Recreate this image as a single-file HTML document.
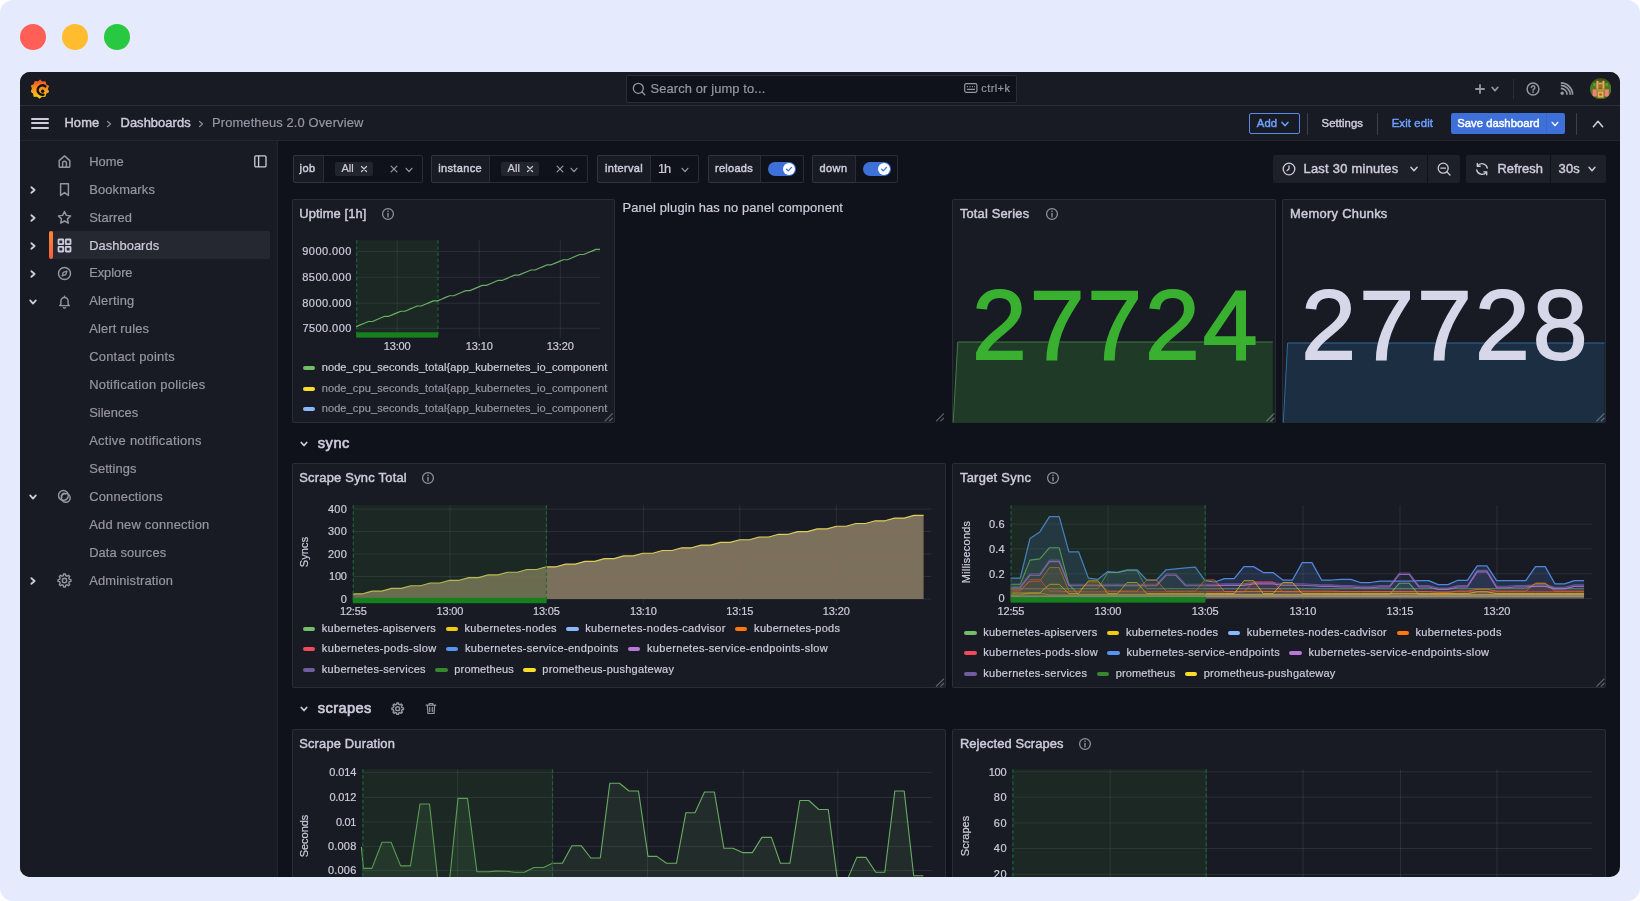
<!DOCTYPE html>
<html lang="en"><head><meta charset="utf-8"><title>Prometheus 2.0 Overview - Dashboards - Grafana</title>
<style>
html,body{margin:0;padding:0;background:#fff;}
body{width:1640px;height:901px;overflow:hidden;position:relative;font-family:"Liberation Sans", sans-serif;}
#bg{position:absolute;left:0;top:0;width:1640px;height:901px;background:#e6eafd;border-radius:13px;}
.dot{position:absolute;top:24px;width:26px;height:26px;border-radius:50%;}
#win{position:absolute;left:20px;top:72px;width:1600px;height:805px;border-radius:10px;overflow:hidden;background:#0f121a;}
#pg{position:absolute;left:-20px;top:-72px;width:1640px;height:901px;will-change:transform;}
.a{position:absolute;}
.t{white-space:nowrap;margin:0;padding:0;z-index:2;}
svg.a{z-index:1;}
</style></head>
<body>
<div id="bg"></div>
<div class="dot" style="left:20px;background:#ff5f57"></div>
<div class="dot" style="left:62px;background:#febc2e"></div>
<div class="dot" style="left:104px;background:#28c840"></div>
<div id="win"><div id="pg">
<div class="a" style="left:20px;top:72px;width:1600px;height:33.5px;background:#181b23;"></div>
<div class="a" style="left:20px;top:105px;width:1600px;height:1px;background:rgba(204,204,220,0.10);"></div>
<div class="a" style="left:20px;top:106px;width:1600px;height:34px;background:#181b23;"></div>
<div class="a" style="left:20px;top:140px;width:1600px;height:1px;background:rgba(204,204,220,0.10);"></div>
<svg class="a" style="left:31px;top:78.6px;" width="17.8" height="20.2" viewBox="0 0 20 21" fill="none"><defs><linearGradient id="lg" x1="0" y1="1" x2="0" y2="0"><stop offset="0" stop-color="#fbd115"/><stop offset="0.5" stop-color="#f8941f"/><stop offset="1" stop-color="#f0532a"/></linearGradient></defs>
<path d="M10.2 0.4 L12.6 2.6 L15.9 2.3 L16.6 5.5 L19.6 7.2 L18.3 10.3 L19.7 13.6 L16.7 15.2 L15.7 18.6 L12.3 18.2 L9.6 20.6 L6.9 18.4 L3.5 18.6 L2.9 15.2 L0.3 13.2 L1.7 10.1 L0.6 6.8 L3.6 5.3 L4.6 2.1 L7.9 2.6 Z" fill="url(#lg)" stroke="url(#lg)" stroke-width="1.2" stroke-linejoin="round"/>
<path d="M16.1 7.5 A5.3 5.3 0 1 0 14.1 16.7" stroke="#1a1210" stroke-width="2.7" stroke-linecap="round"/>
<circle cx="13.1" cy="12.9" r="1.9" fill="#1a1210"/></svg>
<div class="a" style="left:626px;top:75px;width:391px;height:27.5px;background:#0f121a;border:1px solid rgba(204,204,220,0.15);border-radius:2px;box-sizing:border-box;"></div>
<svg class="a" style="left:632px;top:81.5px;" width="14" height="14" viewBox="0 0 14 14" fill="none"><circle cx="6.3" cy="6.3" r="5" stroke="#9596a3" stroke-width="1.3"/><path d="M10 10 L12.8 12.8" stroke="#9596a3" stroke-width="1.3" stroke-linecap="round"/></svg>
<div class="a t" style="left:650.50px;top:79.70px;height:18px;line-height:18px;font-size:12.9px;color:#9596a3;letter-spacing:0.125px;-webkit-text-stroke:0.2px #9596a3;">Search or jump to...</div>
<svg class="a" style="left:963.5px;top:83px;" width="14" height="11" viewBox="0 0 14 11" fill="none"><rect x="0.7" y="0.7" width="12.2" height="8.6" rx="1.5" stroke="#9596a3" stroke-width="1.2"/><path d="M3 3.6h1M5.5 3.6h1M8 3.6h1M10.3 3.6h0.6M3 6.4h8" stroke="#9596a3" stroke-width="1.1"/></svg>
<div class="a t" style="left:981.30px;top:80.70px;height:15px;line-height:15px;font-size:11px;color:#9596a3;letter-spacing:0.401px;-webkit-text-stroke:0.2px #9596a3;">ctrl+k</div>
<svg class="a" style="left:1473.5px;top:82.7px;" width="12" height="12" viewBox="0 0 12 12" fill="none"><path d="M6 1.9V10.1M1.9 6H10.1" stroke="#9596a3" stroke-width="1.8" stroke-linecap="round"/></svg>
<svg class="a" style="left:1486.6px;top:80.8px;" width="16" height="16" viewBox="-8 -8 16 16" fill="none"><path d="M-2.9 -1.682 L0 1.682 L2.9 -1.682" stroke="#9596a3" stroke-width="1.7" stroke-linecap="round" stroke-linejoin="round"/></svg>
<div class="a" style="left:1512.5px;top:78.5px;width:1px;height:20px;background:rgba(204,204,220,0.10);"></div>
<svg class="a" style="left:1524.6px;top:80.5px;" width="16" height="16" viewBox="0 0 16 16" fill="none"><circle cx="8" cy="8" r="5.9" stroke="#9596a3" stroke-width="1.5"/><path d="M6.3 6.6a1.75 1.75 0 1 1 2.5 1.6c-0.5 0.3-0.8 0.5-0.8 1.1" stroke="#9596a3" stroke-width="1.5" stroke-linecap="round"/><circle cx="8" cy="11.1" r="0.95" fill="#9596a3"/></svg>
<svg class="a" style="left:1560.3px;top:82px;" width="14" height="14" viewBox="0 0 14 14" fill="none"><circle cx="2.2" cy="11.2" r="1.7" fill="#9596a3"/><path d="M0.8 6.4a6.3 6.3 0 0 1 6.3 6.3M0.8 3.3a9.4 9.4 0 0 1 9.4 9.4M0.8 0.9a11.8 11.8 0 0 1 11.8 11.8" stroke="#9596a3" stroke-width="1.7"/></svg>
<svg class="a" style="left:1589.6px;top:77.5px;" width="21.4" height="21.4" viewBox="0 0 21.4 21.4" fill="none"><defs><clipPath id="avc"><circle cx="10.7" cy="10.7" r="10.7"/></clipPath><linearGradient id="avg" x1="0" y1="0" x2="0" y2="1"><stop offset="0" stop-color="#3a4a12"/><stop offset="0.35" stop-color="#4b7a1f"/><stop offset="0.8" stop-color="#5a7a1e"/><stop offset="1" stop-color="#4a5a14"/></linearGradient></defs>
<g clip-path="url(#avc)"><rect width="22" height="22" fill="url(#avg)"/>
<rect x="6.4" y="2.8" width="2.1" height="8" fill="#f0a565"/><rect x="12.4" y="2.8" width="2.1" height="8" fill="#f0a565"/>
<rect x="8.4" y="4.6" width="4.2" height="1.9" fill="#e8a050"/>
<rect x="8.6" y="7.2" width="3.8" height="2.4" fill="#b8682a"/>
<rect x="2.6" y="11.4" width="4.2" height="7" fill="#ee827a"/><rect x="14.6" y="11.4" width="4.2" height="7" fill="#ee827a"/><rect x="3.2" y="5" width="2.6" height="3" fill="#5d9a2a"/><rect x="15.4" y="5" width="2.6" height="3" fill="#5d9a2a"/>
<rect x="6.8" y="11" width="7.8" height="2.2" fill="#c98a35"/>
<rect x="7.6" y="13.4" width="6" height="6.2" fill="#e6b055"/>
<rect x="9.4" y="15.4" width="2.4" height="2.2" fill="#b85a12"/>
</g></svg>
<div class="a" style="left:31px;top:117.9px;width:18.3px;height:1.8px;background:#ccccdc;border-radius:1px;"></div>
<div class="a" style="left:31px;top:122.4px;width:18.3px;height:1.8px;background:#ccccdc;border-radius:1px;"></div>
<div class="a" style="left:31px;top:126.9px;width:18.3px;height:1.8px;background:#ccccdc;border-radius:1px;"></div>
<div class="a t" style="left:64.40px;top:114.30px;height:18px;line-height:18px;font-size:12.9px;color:#ccccdc;letter-spacing:0.152px;-webkit-text-stroke:0.45px #ccccdc;">Home</div>
<svg class="a" style="left:100.8px;top:115.6px;" width="16" height="16" viewBox="-8 -8 16 16" fill="none"><path d="M-1.508 -2.6 L1.508 0 L-1.508 2.6" stroke="#9596a3" stroke-width="1.2" stroke-linecap="round" stroke-linejoin="round"/></svg>
<div class="a t" style="left:120.50px;top:114.30px;height:18px;line-height:18px;font-size:12.9px;color:#ccccdc;letter-spacing:0.068px;-webkit-text-stroke:0.45px #ccccdc;">Dashboards</div>
<svg class="a" style="left:193px;top:115.6px;" width="16" height="16" viewBox="-8 -8 16 16" fill="none"><path d="M-1.508 -2.6 L1.508 0 L-1.508 2.6" stroke="#9596a3" stroke-width="1.2" stroke-linecap="round" stroke-linejoin="round"/></svg>
<div class="a t" style="left:212.00px;top:114.30px;height:18px;line-height:18px;font-size:12.9px;color:#9596a3;letter-spacing:0.134px;-webkit-text-stroke:0.2px #9596a3;">Prometheus 2.0 Overview</div>
<div class="a" style="left:1249px;top:113.4px;width:51px;height:20.6px;border:1px solid #5b8ae6;border-radius:2px;box-sizing:border-box;"></div>
<div class="a t" style="left:1256.80px;top:115.30px;height:16px;line-height:16px;font-size:11.3px;color:#6e9fff;letter-spacing:0.097px;-webkit-text-stroke:0.45px #6e9fff;">Add</div>
<svg class="a" style="left:1277.2px;top:115.6px;" width="16" height="16" viewBox="-8 -8 16 16" fill="none"><path d="M-3.1 -1.798 L0 1.798 L3.1 -1.798" stroke="#6e9fff" stroke-width="1.4" stroke-linecap="round" stroke-linejoin="round"/></svg>
<div class="a" style="left:1307.2px;top:112.7px;width:1px;height:22px;background:rgba(204,204,220,0.2);"></div>
<div class="a t" style="left:1321.50px;top:115.30px;height:16px;line-height:16px;font-size:11.3px;color:#ccccdc;letter-spacing:0.096px;-webkit-text-stroke:0.45px #ccccdc;">Settings</div>
<div class="a" style="left:1377.4px;top:112.7px;width:1px;height:22px;background:rgba(204,204,220,0.2);"></div>
<div class="a t" style="left:1391.70px;top:115.30px;height:16px;line-height:16px;font-size:11.3px;color:#6e9fff;letter-spacing:0.135px;-webkit-text-stroke:0.45px #6e9fff;">Exit edit</div>
<div class="a" style="left:1450.7px;top:113.4px;width:114.2px;height:20.6px;background:#3d71d9;border-radius:2px;"></div>
<div class="a t" style="left:1457.30px;top:115.30px;height:16px;line-height:16px;font-size:11.3px;color:#ffffff;letter-spacing:-0.006px;-webkit-text-stroke:0.45px #ffffff;">Save dashboard</div>
<div class="a" style="left:1545.6px;top:113.4px;width:1px;height:20.6px;background:rgba(0,0,0,0.07);"></div>
<svg class="a" style="left:1547.2px;top:115.7px;" width="16" height="16" viewBox="-8 -8 16 16" fill="none"><path d="M-2.8 -1.624 L0 1.624 L2.8 -1.624" stroke="#ffffff" stroke-width="1.4" stroke-linecap="round" stroke-linejoin="round"/></svg>
<div class="a" style="left:1575.5px;top:112.7px;width:1px;height:22px;background:rgba(204,204,220,0.2);"></div>
<svg class="a" style="left:1590.3px;top:115.5px;" width="16" height="16" viewBox="-8 -8 16 16" fill="none"><path d="M-4.6 2.668 L0 -2.668 L4.6 2.668" stroke="#ccccdc" stroke-width="1.6" stroke-linecap="round" stroke-linejoin="round"/></svg>
<div class="a" style="left:20px;top:141px;width:256.5px;height:740px;background:#181b23;"></div>
<div class="a" style="left:276.5px;top:141px;width:1px;height:740px;background:rgba(204,204,220,0.10);"></div>
<div class="a" style="left:50px;top:231.32px;width:220px;height:28px;background:rgba(204,204,220,0.08);border-radius:2px;"></div>
<div class="a" style="left:48.5px;top:231.32px;width:4px;height:28px;background:linear-gradient(0deg,#f55f3e,#ff8833);border-radius:2px;"></div>
<div class="a t" style="left:89.20px;top:152.70px;height:18px;line-height:18px;font-size:12.9px;color:#9596a3;letter-spacing:0.052px;-webkit-text-stroke:0.2px #9596a3;">Home</div>
<svg class="a" style="left:57px;top:154.1px;" width="15" height="15" viewBox="0 0 15 15" fill="none"><path d="M2.2 6.6 L7.5 1.9 L12.8 6.6 V12.6 a0.6 0.6 0 0 1 -0.6 0.6 H2.8 a0.6 0.6 0 0 1 -0.6 -0.6 Z M5.6 13 V9.2 a1.9 1.9 0 0 1 3.8 0 V13" stroke="#9596a3" stroke-width="1.45" stroke-linejoin="round"/></svg>
<div class="a t" style="left:89.20px;top:180.64px;height:18px;line-height:18px;font-size:12.9px;color:#9596a3;letter-spacing:0.146px;-webkit-text-stroke:0.2px #9596a3;">Bookmarks</div>
<svg class="a" style="left:24.8px;top:181.74px;" width="16" height="16" viewBox="-8 -8 16 16" fill="none"><path d="M-1.624 -2.8 L1.624 0 L-1.624 2.8" stroke="#ccccdc" stroke-width="1.8" stroke-linecap="round" stroke-linejoin="round"/></svg>
<svg class="a" style="left:57px;top:182.04px;" width="15" height="15" viewBox="0 0 15 15" fill="none"><path d="M3.6 1.8 H11.4 V13.4 L7.5 10.6 L3.6 13.4 Z" stroke="#9596a3" stroke-width="1.45" stroke-linejoin="round"/></svg>
<div class="a t" style="left:89.20px;top:208.58px;height:18px;line-height:18px;font-size:12.9px;color:#9596a3;letter-spacing:0.074px;-webkit-text-stroke:0.2px #9596a3;">Starred</div>
<svg class="a" style="left:24.8px;top:209.68px;" width="16" height="16" viewBox="-8 -8 16 16" fill="none"><path d="M-1.624 -2.8 L1.624 0 L-1.624 2.8" stroke="#ccccdc" stroke-width="1.8" stroke-linecap="round" stroke-linejoin="round"/></svg>
<svg class="a" style="left:57px;top:209.98px;" width="15" height="15" viewBox="0 0 15 15" fill="none"><path d="M7.5 1.5 L9.35 5.35 L13.6 5.9 L10.5 8.85 L11.3 13.05 L7.5 11 L3.7 13.05 L4.5 8.85 L1.4 5.9 L5.65 5.35 Z" stroke="#9596a3" stroke-width="1.45" stroke-linejoin="round"/></svg>
<div class="a t" style="left:89.20px;top:236.52px;height:18px;line-height:18px;font-size:12.9px;color:#ccccdc;letter-spacing:0.048px;-webkit-text-stroke:0.2px #ccccdc;">Dashboards</div>
<svg class="a" style="left:24.8px;top:237.62px;" width="16" height="16" viewBox="-8 -8 16 16" fill="none"><path d="M-1.624 -2.8 L1.624 0 L-1.624 2.8" stroke="#ccccdc" stroke-width="1.8" stroke-linecap="round" stroke-linejoin="round"/></svg>
<svg class="a" style="left:57px;top:237.92px;" width="15" height="15" viewBox="0 0 15 15" fill="none"><rect x="1.5" y="1.5" width="4.7" height="4.7" rx="0.5" stroke="#ccccdc" stroke-width="1.8"/><rect x="8.8" y="1.5" width="4.7" height="4.7" rx="0.5" stroke="#ccccdc" stroke-width="1.8"/><rect x="1.5" y="8.8" width="4.7" height="4.7" rx="0.5" stroke="#ccccdc" stroke-width="1.8"/><rect x="8.8" y="8.8" width="4.7" height="4.7" rx="0.5" stroke="#ccccdc" stroke-width="1.8"/></svg>
<div class="a t" style="left:89.20px;top:264.46px;height:18px;line-height:18px;font-size:12.9px;color:#9596a3;letter-spacing:-0.060px;-webkit-text-stroke:0.2px #9596a3;">Explore</div>
<svg class="a" style="left:24.8px;top:265.56px;" width="16" height="16" viewBox="-8 -8 16 16" fill="none"><path d="M-1.624 -2.8 L1.624 0 L-1.624 2.8" stroke="#ccccdc" stroke-width="1.8" stroke-linecap="round" stroke-linejoin="round"/></svg>
<svg class="a" style="left:57px;top:265.86px;" width="15" height="15" viewBox="0 0 15 15" fill="none"><circle cx="7.5" cy="7.5" r="6" stroke="#9596a3" stroke-width="1.45"/><path d="M9.9 5.1 L8.7 8.7 L5.1 9.9 L6.3 6.3 Z" stroke="#9596a3" stroke-width="1.3" stroke-linejoin="round"/></svg>
<div class="a t" style="left:89.20px;top:292.40px;height:18px;line-height:18px;font-size:12.9px;color:#9596a3;letter-spacing:0.198px;-webkit-text-stroke:0.2px #9596a3;">Alerting</div>
<svg class="a" style="left:24.8px;top:293.5px;" width="16" height="16" viewBox="-8 -8 16 16" fill="none"><path d="M-2.8 -1.624 L0 1.624 L2.8 -1.624" stroke="#ccccdc" stroke-width="1.8" stroke-linecap="round" stroke-linejoin="round"/></svg>
<svg class="a" style="left:57px;top:293.8px;" width="15" height="15" viewBox="0 0 15 15" fill="none"><path d="M3.9 10.2 V7 a3.6 3.6 0 0 1 7.2 0 V10.2 L12.3 11.6 H2.7 Z" stroke="#9596a3" stroke-width="1.45" stroke-linejoin="round"/><path d="M6.2 13.2 a1.4 1.4 0 0 0 2.6 0" stroke="#9596a3" stroke-width="1.4"/><path d="M7.5 2.1 V3.2" stroke="#9596a3" stroke-width="1.4" stroke-linecap="round"/></svg>
<div class="a t" style="left:89.20px;top:320.34px;height:18px;line-height:18px;font-size:12.9px;color:#9596a3;letter-spacing:0.179px;-webkit-text-stroke:0.2px #9596a3;">Alert rules</div>
<div class="a t" style="left:89.20px;top:348.28px;height:18px;line-height:18px;font-size:12.9px;color:#9596a3;letter-spacing:0.242px;-webkit-text-stroke:0.2px #9596a3;">Contact points</div>
<div class="a t" style="left:89.20px;top:376.22px;height:18px;line-height:18px;font-size:12.9px;color:#9596a3;letter-spacing:0.284px;-webkit-text-stroke:0.2px #9596a3;">Notification policies</div>
<div class="a t" style="left:89.20px;top:404.16px;height:18px;line-height:18px;font-size:12.9px;color:#9596a3;letter-spacing:0.033px;-webkit-text-stroke:0.2px #9596a3;">Silences</div>
<div class="a t" style="left:89.20px;top:432.10px;height:18px;line-height:18px;font-size:12.9px;color:#9596a3;letter-spacing:0.287px;-webkit-text-stroke:0.2px #9596a3;">Active notifications</div>
<div class="a t" style="left:89.20px;top:460.04px;height:18px;line-height:18px;font-size:12.9px;color:#9596a3;letter-spacing:0.090px;-webkit-text-stroke:0.2px #9596a3;">Settings</div>
<div class="a t" style="left:89.20px;top:487.98px;height:18px;line-height:18px;font-size:12.9px;color:#9596a3;letter-spacing:0.193px;-webkit-text-stroke:0.2px #9596a3;">Connections</div>
<svg class="a" style="left:24.8px;top:489.08px;" width="16" height="16" viewBox="-8 -8 16 16" fill="none"><path d="M-2.8 -1.624 L0 1.624 L2.8 -1.624" stroke="#ccccdc" stroke-width="1.8" stroke-linecap="round" stroke-linejoin="round"/></svg>
<svg class="a" style="left:57px;top:489.38px;" width="15" height="15" viewBox="0 0 15 15" fill="none"><circle cx="6.4" cy="6.4" r="4.9" stroke="#9596a3" stroke-width="1.45"/><circle cx="8.8" cy="8.8" r="4.4" stroke="#9596a3" stroke-width="1.45"/><path d="M5.2 8.9 a2.6 2.6 0 0 1 3.7 -3.7" stroke="#9596a3" stroke-width="1.3"/></svg>
<div class="a t" style="left:89.20px;top:515.92px;height:18px;line-height:18px;font-size:12.9px;color:#9596a3;letter-spacing:0.233px;-webkit-text-stroke:0.2px #9596a3;">Add new connection</div>
<div class="a t" style="left:89.20px;top:543.86px;height:18px;line-height:18px;font-size:12.9px;color:#9596a3;letter-spacing:0.087px;-webkit-text-stroke:0.2px #9596a3;">Data sources</div>
<div class="a t" style="left:89.20px;top:571.80px;height:18px;line-height:18px;font-size:12.9px;color:#9596a3;letter-spacing:0.165px;-webkit-text-stroke:0.2px #9596a3;">Administration</div>
<svg class="a" style="left:24.8px;top:572.9px;" width="16" height="16" viewBox="-8 -8 16 16" fill="none"><path d="M-1.624 -2.8 L1.624 0 L-1.624 2.8" stroke="#ccccdc" stroke-width="1.8" stroke-linecap="round" stroke-linejoin="round"/></svg>
<svg class="a" style="left:57px;top:573.2px;" width="15" height="15" viewBox="0 0 15 15" fill="none"><circle cx="7.5" cy="7.5" r="2.2" stroke="#9596a3" stroke-width="1.4"/><path d="M6.33 2.64 L6.58 1.06 L8.42 1.06 L8.67 2.64 L10.11 3.24 L11.40 2.30 L12.70 3.60 L11.76 4.89 L12.36 6.33 L13.94 6.58 L13.94 8.42 L12.36 8.67 L11.76 10.11 L12.70 11.40 L11.40 12.70 L10.11 11.76 L8.67 12.36 L8.42 13.94 L6.58 13.94 L6.33 12.36 L4.89 11.76 L3.60 12.70 L2.30 11.40 L3.24 10.11 L2.64 8.67 L1.06 8.42 L1.06 6.58 L2.64 6.33 L3.24 4.89 L2.30 3.60 L3.60 2.30 L4.89 3.24 Z" stroke="#9596a3" stroke-width="1.4" stroke-linejoin="round"/></svg>
<svg class="a" style="left:253.5px;top:155.3px;" width="13" height="13" viewBox="0 0 13 13" fill="none"><rect x="0.8" y="0.9" width="11.2" height="11" rx="1.2" stroke="#ccccdc" stroke-width="1.3"/><path d="M4.6 1V12" stroke="#ccccdc" stroke-width="1.3"/></svg>
<div class="a" style="left:292.5px;top:155.4px;width:31px;height:27.4px;background:#181b23;border:1px solid rgba(204,204,220,0.15);border-radius:2px 0 0 2px;box-sizing:border-box;"></div>
<div class="a" style="left:322.5px;top:155.4px;width:100.5px;height:27.4px;background:#0f121a;border:1px solid rgba(204,204,220,0.15);border-radius:0 2px 2px 0;box-sizing:border-box;"></div>
<div class="a t" style="left:299.50px;top:161.20px;height:15px;line-height:15px;font-size:11px;color:#ccccdc;letter-spacing:0.438px;-webkit-text-stroke:0.45px #ccccdc;">job</div>
<div class="a" style="left:334.5px;top:162px;width:38.5px;height:14.3px;background:rgba(204,204,220,0.1);border-radius:2px;"></div>
<div class="a t" style="left:341.50px;top:161.30px;height:15px;line-height:15px;font-size:11px;color:#ccccdc;letter-spacing:-0.011px;-webkit-text-stroke:0.2px #ccccdc;">All</div>
<svg class="a" style="left:355.8px;top:160.9px;" width="16" height="16" viewBox="-8 -8 16 16" fill="none"><path d="M-2.5 -2.5 L2.5 2.5 M2.5 -2.5 L-2.5 2.5" stroke="#ccccdc" stroke-width="1.2" stroke-linecap="round"/></svg>
<svg class="a" style="left:386.3px;top:161.3px;" width="16" height="16" viewBox="-8 -8 16 16" fill="none"><path d="M-2.9 -2.9 L2.9 2.9 M2.9 -2.9 L-2.9 2.9" stroke="#9596a3" stroke-width="1.25" stroke-linecap="round"/></svg>
<svg class="a" style="left:400.6px;top:161.5px;" width="16" height="16" viewBox="-8 -8 16 16" fill="none"><path d="M-2.9 -1.682 L0 1.682 L2.9 -1.682" stroke="#9596a3" stroke-width="1.3" stroke-linecap="round" stroke-linejoin="round"/></svg>
<div class="a" style="left:431.2px;top:155.4px;width:59px;height:27.4px;background:#181b23;border:1px solid rgba(204,204,220,0.15);border-radius:2px 0 0 2px;box-sizing:border-box;"></div>
<div class="a" style="left:489.2px;top:155.4px;width:99.1px;height:27.4px;background:#0f121a;border:1px solid rgba(204,204,220,0.15);border-radius:0 2px 2px 0;box-sizing:border-box;"></div>
<div class="a t" style="left:438.20px;top:161.20px;height:15px;line-height:15px;font-size:11px;color:#ccccdc;letter-spacing:0.352px;-webkit-text-stroke:0.45px #ccccdc;">instance</div>
<div class="a" style="left:500.7px;top:162px;width:38.5px;height:14.3px;background:rgba(204,204,220,0.1);border-radius:2px;"></div>
<div class="a t" style="left:507.60px;top:161.30px;height:15px;line-height:15px;font-size:11px;color:#ccccdc;letter-spacing:0.055px;-webkit-text-stroke:0.2px #ccccdc;">All</div>
<svg class="a" style="left:521.6px;top:160.9px;" width="16" height="16" viewBox="-8 -8 16 16" fill="none"><path d="M-2.5 -2.5 L2.5 2.5 M2.5 -2.5 L-2.5 2.5" stroke="#ccccdc" stroke-width="1.2" stroke-linecap="round"/></svg>
<svg class="a" style="left:552px;top:161.3px;" width="16" height="16" viewBox="-8 -8 16 16" fill="none"><path d="M-2.9 -2.9 L2.9 2.9 M2.9 -2.9 L-2.9 2.9" stroke="#9596a3" stroke-width="1.25" stroke-linecap="round"/></svg>
<svg class="a" style="left:566.1px;top:161.5px;" width="16" height="16" viewBox="-8 -8 16 16" fill="none"><path d="M-2.9 -1.682 L0 1.682 L2.9 -1.682" stroke="#9596a3" stroke-width="1.3" stroke-linecap="round" stroke-linejoin="round"/></svg>
<div class="a" style="left:596.8px;top:155.4px;width:53.8px;height:27.4px;background:#181b23;border:1px solid rgba(204,204,220,0.15);border-radius:2px 0 0 2px;box-sizing:border-box;"></div>
<div class="a" style="left:649.6px;top:155.4px;width:49.9px;height:27.4px;background:#0f121a;border:1px solid rgba(204,204,220,0.15);border-radius:0 2px 2px 0;box-sizing:border-box;"></div>
<div class="a t" style="left:605.00px;top:161.20px;height:15px;line-height:15px;font-size:11px;color:#ccccdc;letter-spacing:0.316px;-webkit-text-stroke:0.45px #ccccdc;">interval</div>
<div class="a t" style="left:658.00px;top:159.70px;height:18px;line-height:18px;font-size:12.9px;color:#ccccdc;letter-spacing:-1.172px;-webkit-text-stroke:0.2px #ccccdc;">1h</div>
<svg class="a" style="left:676.6px;top:161.5px;" width="16" height="16" viewBox="-8 -8 16 16" fill="none"><path d="M-2.9 -1.682 L0 1.682 L2.9 -1.682" stroke="#9596a3" stroke-width="1.3" stroke-linecap="round" stroke-linejoin="round"/></svg>
<div class="a" style="left:708px;top:155.4px;width:52.8px;height:27.4px;background:#181b23;border:1px solid rgba(204,204,220,0.15);border-radius:2px 0 0 2px;box-sizing:border-box;"></div>
<div class="a" style="left:759.8px;top:155.4px;width:44px;height:27.4px;background:#0f121a;border:1px solid rgba(204,204,220,0.15);border-radius:0 2px 2px 0;box-sizing:border-box;"></div>
<div class="a t" style="left:715.00px;top:161.20px;height:15px;line-height:15px;font-size:11px;color:#ccccdc;letter-spacing:0.275px;-webkit-text-stroke:0.45px #ccccdc;">reloads</div>
<div class="a" style="left:767.5px;top:162px;width:28px;height:13.8px;background:#3d71d9;border-radius:7px;"></div>
<div class="a" style="left:782.9px;top:162.9px;width:12px;height:12px;background:#ffffff;border-radius:6px;"></div>
<svg class="a" style="left:782.9px;top:162.9px;" width="12" height="12" viewBox="0 0 12 12" fill="none"><path d="M3.6 6.2 L5.3 7.9 L8.5 4.4" stroke="#3d71d9" stroke-width="1.3" stroke-linecap="round" stroke-linejoin="round"/></svg>
<div class="a" style="left:811.8px;top:155.4px;width:43.8px;height:27.4px;background:#181b23;border:1px solid rgba(204,204,220,0.15);border-radius:2px 0 0 2px;box-sizing:border-box;"></div>
<div class="a" style="left:854.6px;top:155.4px;width:43.6px;height:27.4px;background:#0f121a;border:1px solid rgba(204,204,220,0.15);border-radius:0 2px 2px 0;box-sizing:border-box;"></div>
<div class="a t" style="left:819.50px;top:161.20px;height:15px;line-height:15px;font-size:11px;color:#ccccdc;letter-spacing:0.426px;-webkit-text-stroke:0.45px #ccccdc;">down</div>
<div class="a" style="left:862.5px;top:162px;width:28px;height:13.8px;background:#3d71d9;border-radius:7px;"></div>
<div class="a" style="left:877.9px;top:162.9px;width:12px;height:12px;background:#ffffff;border-radius:6px;"></div>
<svg class="a" style="left:877.9px;top:162.9px;" width="12" height="12" viewBox="0 0 12 12" fill="none"><path d="M3.6 6.2 L5.3 7.9 L8.5 4.4" stroke="#3d71d9" stroke-width="1.3" stroke-linecap="round" stroke-linejoin="round"/></svg>
<div class="a" style="left:1272.5px;top:155px;width:154.5px;height:27.8px;background:rgba(204,204,220,0.08);border-radius:2px 0 0 2px;"></div>
<div class="a" style="left:1428px;top:155px;width:32.2px;height:27.8px;background:rgba(204,204,220,0.08);border-radius:0 2px 2px 0;"></div>
<svg class="a" style="left:1281.5px;top:162px;" width="14" height="14" viewBox="0 0 14 14" fill="none"><circle cx="7" cy="7" r="5.8" stroke="#ccccdc" stroke-width="1.3"/><path d="M7 3.8V7L5.1 8.6" stroke="#ccccdc" stroke-width="1.3" stroke-linecap="round" stroke-linejoin="round"/></svg>
<div class="a t" style="left:1303.50px;top:159.70px;height:18px;line-height:18px;font-size:12.9px;color:#ccccdc;letter-spacing:0.266px;-webkit-text-stroke:0.45px #ccccdc;">Last 30 minutes</div>
<svg class="a" style="left:1406px;top:161.3px;" width="16" height="16" viewBox="-8 -8 16 16" fill="none"><path d="M-3.1 -1.798 L0 1.798 L3.1 -1.798" stroke="#ccccdc" stroke-width="1.4" stroke-linecap="round" stroke-linejoin="round"/></svg>
<svg class="a" style="left:1436.6px;top:162px;" width="14" height="14" viewBox="0 0 14 14" fill="none"><circle cx="6.2" cy="6.2" r="5" stroke="#ccccdc" stroke-width="1.3"/><path d="M10 10L13 13M3.9 6.2H8.5" stroke="#ccccdc" stroke-width="1.3" stroke-linecap="round"/></svg>
<div class="a" style="left:1466.3px;top:155px;width:83.4px;height:27.8px;background:rgba(204,204,220,0.08);border-radius:2px 0 0 2px;"></div>
<div class="a" style="left:1550.7px;top:155px;width:55.7px;height:27.8px;background:rgba(204,204,220,0.08);border-radius:0 2px 2px 0;"></div>
<svg class="a" style="left:1475px;top:161.8px;" width="14" height="14" viewBox="0 0 14 14" fill="none"><path d="M12.3 6.1A5.4 5.4 0 0 0 2.6 3.9M1.7 7.9A5.4 5.4 0 0 0 11.4 10.1" stroke="#ccccdc" stroke-width="1.35" stroke-linecap="round"/><path d="M2.3 1.3V4.2H5.2M11.7 12.7V9.8H8.8" stroke="#ccccdc" stroke-width="1.35" stroke-linecap="round" stroke-linejoin="round"/></svg>
<div class="a t" style="left:1497.50px;top:159.70px;height:18px;line-height:18px;font-size:12.9px;color:#ccccdc;letter-spacing:0.037px;-webkit-text-stroke:0.45px #ccccdc;">Refresh</div>
<div class="a t" style="left:1558.50px;top:159.70px;height:18px;line-height:18px;font-size:12.9px;color:#ccccdc;letter-spacing:0.268px;-webkit-text-stroke:0.45px #ccccdc;">30s</div>
<svg class="a" style="left:1583.8px;top:161.3px;" width="16" height="16" viewBox="-8 -8 16 16" fill="none"><path d="M-3 -1.74 L0 1.74 L3 -1.74" stroke="#ccccdc" stroke-width="1.4" stroke-linecap="round" stroke-linejoin="round"/></svg>
<div class="a" style="left:291.5px;top:198.8px;width:323.2px;height:224.4px;background:#181b23;border:1px solid rgba(204,204,220,0.10);border-radius:2px;box-sizing:border-box;"></div>
<div class="a t" style="left:299.20px;top:204.80px;height:18px;line-height:18px;font-size:12.9px;color:#ccccdc;letter-spacing:0.134px;-webkit-text-stroke:0.45px #ccccdc;">Uptime [1h]</div>
<svg class="a" style="left:380.2px;top:205.7px;" width="16" height="16" viewBox="-8 -8 16 16" fill="none"><circle r="5.4" stroke="#9596a3" stroke-width="1.2"/><path d="M0 -0.6V2.8" stroke="#9596a3" stroke-width="1.3" stroke-linecap="round"/><circle cy="-2.7" r="0.8" fill="#9596a3"/></svg>
<div class="a t" style="left:302.25px;top:244.30px;height:15px;line-height:15px;font-size:11px;color:#ccccdc;letter-spacing:0.451px;-webkit-text-stroke:0.2px #ccccdc;">9000.000</div>
<div class="a t" style="left:302.25px;top:270.10px;height:15px;line-height:15px;font-size:11px;color:#ccccdc;letter-spacing:0.451px;-webkit-text-stroke:0.2px #ccccdc;">8500.000</div>
<div class="a t" style="left:302.25px;top:296.00px;height:15px;line-height:15px;font-size:11px;color:#ccccdc;letter-spacing:0.451px;-webkit-text-stroke:0.2px #ccccdc;">8000.000</div>
<div class="a t" style="left:302.51px;top:321.10px;height:15px;line-height:15px;font-size:11px;color:#ccccdc;letter-spacing:0.414px;-webkit-text-stroke:0.2px #ccccdc;">7500.000</div>
<div class="a t" style="left:383.73px;top:339.30px;height:15px;line-height:15px;font-size:11px;color:#ccccdc;letter-spacing:-0.146px;-webkit-text-stroke:0.2px #ccccdc;">13:00</div>
<div class="a t" style="left:465.83px;top:339.30px;height:15px;line-height:15px;font-size:11px;color:#ccccdc;letter-spacing:-0.146px;-webkit-text-stroke:0.2px #ccccdc;">13:10</div>
<div class="a t" style="left:546.83px;top:339.30px;height:15px;line-height:15px;font-size:11px;color:#ccccdc;letter-spacing:-0.146px;-webkit-text-stroke:0.2px #ccccdc;">13:20</div>
<div class="a" style="left:302.9px;top:366px;width:12.4px;height:4px;background:#73bf69;border-radius:2px;"></div>
<div class="a t" style="left:321.70px;top:360.10px;height:15px;line-height:15px;font-size:11px;color:#ccccdc;letter-spacing:0.111px;-webkit-text-stroke:0.2px #ccccdc;">node_cpu_seconds_total{app_kubernetes_io_component</div>
<div class="a" style="left:302.9px;top:386.5px;width:12.4px;height:4px;background:#fade2a;border-radius:2px;"></div>
<div class="a t" style="left:321.70px;top:380.60px;height:15px;line-height:15px;font-size:11px;color:#9596a3;letter-spacing:0.111px;-webkit-text-stroke:0.2px #9596a3;">node_cpu_seconds_total{app_kubernetes_io_component</div>
<div class="a" style="left:302.9px;top:407px;width:12.4px;height:4px;background:#8ab8ff;border-radius:2px;"></div>
<div class="a t" style="left:321.70px;top:401.10px;height:15px;line-height:15px;font-size:11px;color:#9596a3;letter-spacing:0.111px;-webkit-text-stroke:0.2px #9596a3;">node_cpu_seconds_total{app_kubernetes_io_component</div>
<div class="a t" style="left:622.40px;top:199.40px;height:18px;line-height:18px;font-size:12.9px;color:#ccccdc;letter-spacing:0.139px;-webkit-text-stroke:0.2px #ccccdc;">Panel plugin has no panel component</div>
<div class="a" style="left:952.2px;top:198.8px;width:324.1px;height:224.4px;background:#181b23;border:1px solid rgba(204,204,220,0.10);border-radius:2px;box-sizing:border-box;"></div>
<div class="a t" style="left:959.90px;top:204.80px;height:18px;line-height:18px;font-size:12.9px;color:#ccccdc;letter-spacing:0.170px;-webkit-text-stroke:0.45px #ccccdc;">Total Series</div>
<svg class="a" style="left:1043.8px;top:205.7px;" width="16" height="16" viewBox="-8 -8 16 16" fill="none"><circle r="5.4" stroke="#9596a3" stroke-width="1.2"/><path d="M0 -0.6V2.8" stroke="#9596a3" stroke-width="1.3" stroke-linecap="round"/><circle cy="-2.7" r="0.8" fill="#9596a3"/></svg>
<div class="a t" style="left:972px;top:269.7px;height:110px;line-height:110px;font-size:98.5px;color:#39b030;letter-spacing:2.9px;-webkit-text-stroke:1.8px #39b030;">27724</div>
<div class="a" style="left:1282.3px;top:198.8px;width:324.1px;height:224.4px;background:#181b23;border:1px solid rgba(204,204,220,0.10);border-radius:2px;box-sizing:border-box;"></div>
<div class="a t" style="left:1290.00px;top:204.80px;height:18px;line-height:18px;font-size:12.9px;color:#ccccdc;letter-spacing:0.289px;-webkit-text-stroke:0.45px #ccccdc;">Memory Chunks</div>
<div class="a t" style="left:1301.3px;top:269.7px;height:110px;line-height:110px;font-size:98.5px;color:#d6d7e8;letter-spacing:3.1px;-webkit-text-stroke:1.8px #d6d7e8;">27728</div>
<svg class="a" style="left:295.5px;top:436.1px;" width="16" height="16" viewBox="-8 -8 16 16" fill="none"><path d="M-2.7 -1.566 L0 1.566 L2.7 -1.566" stroke="#ccccdc" stroke-width="1.7" stroke-linecap="round" stroke-linejoin="round"/></svg>
<div class="a t" style="left:317.80px;top:433.20px;height:20px;line-height:20px;font-size:14.6px;color:#ccccdc;letter-spacing:0.496px;-webkit-text-stroke:0.65px #ccccdc;">sync</div>
<svg class="a" style="left:295.5px;top:701.1px;" width="16" height="16" viewBox="-8 -8 16 16" fill="none"><path d="M-2.7 -1.566 L0 1.566 L2.7 -1.566" stroke="#ccccdc" stroke-width="1.7" stroke-linecap="round" stroke-linejoin="round"/></svg>
<div class="a t" style="left:317.80px;top:698.20px;height:20px;line-height:20px;font-size:14.6px;color:#ccccdc;letter-spacing:0.384px;-webkit-text-stroke:0.65px #ccccdc;">scrapes</div>
<svg class="a" style="left:391.2px;top:702.1px;" width="13.4" height="13.4" viewBox="0 0 15 15" fill="none"><circle cx="7.5" cy="7.5" r="2.2" stroke="#9596a3" stroke-width="1.6"/><path d="M6.33 2.64 L6.58 1.06 L8.42 1.06 L8.67 2.64 L10.11 3.24 L11.40 2.30 L12.70 3.60 L11.76 4.89 L12.36 6.33 L13.94 6.58 L13.94 8.42 L12.36 8.67 L11.76 10.11 L12.70 11.40 L11.40 12.70 L10.11 11.76 L8.67 12.36 L8.42 13.94 L6.58 13.94 L6.33 12.36 L4.89 11.76 L3.60 12.70 L2.30 11.40 L3.24 10.11 L2.64 8.67 L1.06 8.42 L1.06 6.58 L2.64 6.33 L3.24 4.89 L2.30 3.60 L3.60 2.30 L4.89 3.24 Z" stroke="#9596a3" stroke-width="1.6" stroke-linejoin="round"/></svg>
<svg class="a" style="left:425px;top:702.4px;" width="12" height="13" viewBox="0 0 12 13" fill="none"><path d="M1.2 3.2H10.8M4.2 3V1.5H7.8V3M2.4 3.4L2.9 11.5H9.1L9.6 3.4M4.7 5.4V9.6M7.3 5.4V9.6" stroke="#9596a3" stroke-width="1.2" stroke-linecap="round" stroke-linejoin="round"/></svg>
<div class="a" style="left:291.5px;top:463.4px;width:654.5px;height:225px;background:#181b23;border:1px solid rgba(204,204,220,0.10);border-radius:2px;box-sizing:border-box;"></div>
<div class="a t" style="left:299.20px;top:469.40px;height:18px;line-height:18px;font-size:12.9px;color:#ccccdc;letter-spacing:0.243px;-webkit-text-stroke:0.45px #ccccdc;">Scrape Sync Total</div>
<svg class="a" style="left:420px;top:470.3px;" width="16" height="16" viewBox="-8 -8 16 16" fill="none"><circle r="5.4" stroke="#9596a3" stroke-width="1.2"/><path d="M0 -0.6V2.8" stroke="#9596a3" stroke-width="1.3" stroke-linecap="round"/><circle cy="-2.7" r="0.8" fill="#9596a3"/></svg>
<div class="a t" style="left:327.91px;top:501.80px;height:15px;line-height:15px;font-size:11px;color:#ccccdc;letter-spacing:0.314px;-webkit-text-stroke:0.2px #ccccdc;">400</div>
<div class="a t" style="left:327.91px;top:524.20px;height:15px;line-height:15px;font-size:11px;color:#ccccdc;letter-spacing:0.314px;-webkit-text-stroke:0.2px #ccccdc;">300</div>
<div class="a t" style="left:327.91px;top:546.60px;height:15px;line-height:15px;font-size:11px;color:#ccccdc;letter-spacing:0.314px;-webkit-text-stroke:0.2px #ccccdc;">200</div>
<div class="a t" style="left:329.05px;top:569.20px;height:15px;line-height:15px;font-size:11px;color:#ccccdc;letter-spacing:-0.253px;-webkit-text-stroke:0.2px #ccccdc;">100</div>
<div class="a t" style="left:340.77px;top:591.80px;height:15px;line-height:15px;font-size:11px;color:#ccccdc;letter-spacing:0.675px;-webkit-text-stroke:0.2px #ccccdc;">0</div>
<div class="a t" style="left:339.93px;top:604.10px;height:15px;line-height:15px;font-size:11px;color:#ccccdc;letter-spacing:-0.146px;-webkit-text-stroke:0.2px #ccccdc;">12:55</div>
<div class="a t" style="left:436.53px;top:604.10px;height:15px;line-height:15px;font-size:11px;color:#ccccdc;letter-spacing:-0.146px;-webkit-text-stroke:0.2px #ccccdc;">13:00</div>
<div class="a t" style="left:532.93px;top:604.10px;height:15px;line-height:15px;font-size:11px;color:#ccccdc;letter-spacing:-0.146px;-webkit-text-stroke:0.2px #ccccdc;">13:05</div>
<div class="a t" style="left:629.93px;top:604.10px;height:15px;line-height:15px;font-size:11px;color:#ccccdc;letter-spacing:-0.146px;-webkit-text-stroke:0.2px #ccccdc;">13:10</div>
<div class="a t" style="left:726.33px;top:604.10px;height:15px;line-height:15px;font-size:11px;color:#ccccdc;letter-spacing:-0.146px;-webkit-text-stroke:0.2px #ccccdc;">13:15</div>
<div class="a t" style="left:822.83px;top:604.10px;height:15px;line-height:15px;font-size:11px;color:#ccccdc;letter-spacing:-0.146px;-webkit-text-stroke:0.2px #ccccdc;">13:20</div>
<div class="a t" style="left:244.4px;top:545.4px;width:120px;height:14px;line-height:14px;text-align:center;font-size:11px;color:#ccccdc;letter-spacing:0.126px;-webkit-text-stroke:0.2px #ccccdc;transform:rotate(-90deg);">Syncs</div>
<div class="a" style="left:302.8px;top:626.9px;width:12.4px;height:4px;background:#73bf69;border-radius:2px;"></div>
<div class="a t" style="left:321.80px;top:621.00px;height:15px;line-height:15px;font-size:11px;color:#ccccdc;letter-spacing:0.260px;-webkit-text-stroke:0.2px #ccccdc;">kubernetes-apiservers</div>
<div class="a" style="left:445.5px;top:626.9px;width:12.4px;height:4px;background:#f2cc0c;border-radius:2px;"></div>
<div class="a t" style="left:464.50px;top:621.00px;height:15px;line-height:15px;font-size:11px;color:#ccccdc;letter-spacing:0.271px;-webkit-text-stroke:0.2px #ccccdc;">kubernetes-nodes</div>
<div class="a" style="left:566.3px;top:626.9px;width:12.4px;height:4px;background:#8ab8ff;border-radius:2px;"></div>
<div class="a t" style="left:585.30px;top:621.00px;height:15px;line-height:15px;font-size:11px;color:#ccccdc;letter-spacing:0.309px;-webkit-text-stroke:0.2px #ccccdc;">kubernetes-nodes-cadvisor</div>
<div class="a" style="left:735.1px;top:626.9px;width:12.4px;height:4px;background:#ff780a;border-radius:2px;"></div>
<div class="a t" style="left:754.10px;top:621.00px;height:15px;line-height:15px;font-size:11px;color:#ccccdc;letter-spacing:0.283px;-webkit-text-stroke:0.2px #ccccdc;">kubernetes-pods</div>
<div class="a" style="left:302.8px;top:646.8px;width:12.4px;height:4px;background:#f2495c;border-radius:2px;"></div>
<div class="a t" style="left:321.80px;top:640.90px;height:15px;line-height:15px;font-size:11px;color:#ccccdc;letter-spacing:0.359px;-webkit-text-stroke:0.2px #ccccdc;">kubernetes-pods-slow</div>
<div class="a" style="left:446px;top:646.8px;width:12.4px;height:4px;background:#5794f2;border-radius:2px;"></div>
<div class="a t" style="left:465.00px;top:640.90px;height:15px;line-height:15px;font-size:11px;color:#ccccdc;letter-spacing:0.332px;-webkit-text-stroke:0.2px #ccccdc;">kubernetes-service-endpoints</div>
<div class="a" style="left:628px;top:646.8px;width:12.4px;height:4px;background:#b877d9;border-radius:2px;"></div>
<div class="a t" style="left:647.00px;top:640.90px;height:15px;line-height:15px;font-size:11px;color:#ccccdc;letter-spacing:0.334px;-webkit-text-stroke:0.2px #ccccdc;">kubernetes-service-endpoints-slow</div>
<div class="a" style="left:302.8px;top:667.6px;width:12.4px;height:4px;background:#705da0;border-radius:2px;"></div>
<div class="a t" style="left:321.80px;top:661.70px;height:15px;line-height:15px;font-size:11px;color:#ccccdc;letter-spacing:0.298px;-webkit-text-stroke:0.2px #ccccdc;">kubernetes-services</div>
<div class="a" style="left:435.3px;top:667.6px;width:12.4px;height:4px;background:#37872d;border-radius:2px;"></div>
<div class="a t" style="left:454.30px;top:661.70px;height:15px;line-height:15px;font-size:11px;color:#ccccdc;letter-spacing:0.151px;-webkit-text-stroke:0.2px #ccccdc;">prometheus</div>
<div class="a" style="left:523.3px;top:667.6px;width:12.4px;height:4px;background:#fade2a;border-radius:2px;"></div>
<div class="a t" style="left:542.30px;top:661.70px;height:15px;line-height:15px;font-size:11px;color:#ccccdc;letter-spacing:0.242px;-webkit-text-stroke:0.2px #ccccdc;">prometheus-pushgateway</div>
<div class="a" style="left:952.2px;top:463.4px;width:654.2px;height:225px;background:#181b23;border:1px solid rgba(204,204,220,0.10);border-radius:2px;box-sizing:border-box;"></div>
<div class="a t" style="left:959.90px;top:469.40px;height:18px;line-height:18px;font-size:12.9px;color:#ccccdc;letter-spacing:0.293px;-webkit-text-stroke:0.45px #ccccdc;">Target Sync</div>
<svg class="a" style="left:1044.5px;top:470.3px;" width="16" height="16" viewBox="-8 -8 16 16" fill="none"><circle r="5.4" stroke="#9596a3" stroke-width="1.2"/><path d="M0 -0.6V2.8" stroke="#9596a3" stroke-width="1.3" stroke-linecap="round"/><circle cy="-2.7" r="0.8" fill="#9596a3"/></svg>
<div class="a t" style="left:989.03px;top:516.90px;height:15px;line-height:15px;font-size:11px;color:#ccccdc;letter-spacing:0.134px;-webkit-text-stroke:0.2px #ccccdc;">0.6</div>
<div class="a t" style="left:988.90px;top:541.70px;height:15px;line-height:15px;font-size:11px;color:#ccccdc;letter-spacing:0.201px;-webkit-text-stroke:0.2px #ccccdc;">0.4</div>
<div class="a t" style="left:989.03px;top:566.70px;height:15px;line-height:15px;font-size:11px;color:#ccccdc;letter-spacing:0.134px;-webkit-text-stroke:0.2px #ccccdc;">0.2</div>
<div class="a t" style="left:998.48px;top:591.40px;height:15px;line-height:15px;font-size:11px;color:#ccccdc;letter-spacing:0.675px;-webkit-text-stroke:0.2px #ccccdc;">0</div>
<div class="a t" style="left:997.53px;top:604.10px;height:15px;line-height:15px;font-size:11px;color:#ccccdc;letter-spacing:-0.146px;-webkit-text-stroke:0.2px #ccccdc;">12:55</div>
<div class="a t" style="left:1094.53px;top:604.10px;height:15px;line-height:15px;font-size:11px;color:#ccccdc;letter-spacing:-0.146px;-webkit-text-stroke:0.2px #ccccdc;">13:00</div>
<div class="a t" style="left:1191.73px;top:604.10px;height:15px;line-height:15px;font-size:11px;color:#ccccdc;letter-spacing:-0.146px;-webkit-text-stroke:0.2px #ccccdc;">13:05</div>
<div class="a t" style="left:1289.53px;top:604.10px;height:15px;line-height:15px;font-size:11px;color:#ccccdc;letter-spacing:-0.146px;-webkit-text-stroke:0.2px #ccccdc;">13:10</div>
<div class="a t" style="left:1386.53px;top:604.10px;height:15px;line-height:15px;font-size:11px;color:#ccccdc;letter-spacing:-0.146px;-webkit-text-stroke:0.2px #ccccdc;">13:15</div>
<div class="a t" style="left:1483.53px;top:604.10px;height:15px;line-height:15px;font-size:11px;color:#ccccdc;letter-spacing:-0.146px;-webkit-text-stroke:0.2px #ccccdc;">13:20</div>
<div class="a t" style="left:905.6px;top:545.4px;width:120px;height:14px;line-height:14px;text-align:center;font-size:11px;color:#ccccdc;letter-spacing:0.223px;-webkit-text-stroke:0.2px #ccccdc;transform:rotate(-90deg);">Milliseconds</div>
<div class="a" style="left:964.2px;top:631.2px;width:12.4px;height:4px;background:#73bf69;border-radius:2px;"></div>
<div class="a t" style="left:983.20px;top:625.30px;height:15px;line-height:15px;font-size:11px;color:#ccccdc;letter-spacing:0.260px;-webkit-text-stroke:0.2px #ccccdc;">kubernetes-apiservers</div>
<div class="a" style="left:1106.9px;top:631.2px;width:12.4px;height:4px;background:#f2cc0c;border-radius:2px;"></div>
<div class="a t" style="left:1125.90px;top:625.30px;height:15px;line-height:15px;font-size:11px;color:#ccccdc;letter-spacing:0.271px;-webkit-text-stroke:0.2px #ccccdc;">kubernetes-nodes</div>
<div class="a" style="left:1227.7px;top:631.2px;width:12.4px;height:4px;background:#8ab8ff;border-radius:2px;"></div>
<div class="a t" style="left:1246.70px;top:625.30px;height:15px;line-height:15px;font-size:11px;color:#ccccdc;letter-spacing:0.309px;-webkit-text-stroke:0.2px #ccccdc;">kubernetes-nodes-cadvisor</div>
<div class="a" style="left:1396.5px;top:631.2px;width:12.4px;height:4px;background:#ff780a;border-radius:2px;"></div>
<div class="a t" style="left:1415.50px;top:625.30px;height:15px;line-height:15px;font-size:11px;color:#ccccdc;letter-spacing:0.283px;-webkit-text-stroke:0.2px #ccccdc;">kubernetes-pods</div>
<div class="a" style="left:964.2px;top:651.1px;width:12.4px;height:4px;background:#f2495c;border-radius:2px;"></div>
<div class="a t" style="left:983.20px;top:645.20px;height:15px;line-height:15px;font-size:11px;color:#ccccdc;letter-spacing:0.359px;-webkit-text-stroke:0.2px #ccccdc;">kubernetes-pods-slow</div>
<div class="a" style="left:1107.4px;top:651.1px;width:12.4px;height:4px;background:#5794f2;border-radius:2px;"></div>
<div class="a t" style="left:1126.40px;top:645.20px;height:15px;line-height:15px;font-size:11px;color:#ccccdc;letter-spacing:0.332px;-webkit-text-stroke:0.2px #ccccdc;">kubernetes-service-endpoints</div>
<div class="a" style="left:1289.4px;top:651.1px;width:12.4px;height:4px;background:#b877d9;border-radius:2px;"></div>
<div class="a t" style="left:1308.40px;top:645.20px;height:15px;line-height:15px;font-size:11px;color:#ccccdc;letter-spacing:0.334px;-webkit-text-stroke:0.2px #ccccdc;">kubernetes-service-endpoints-slow</div>
<div class="a" style="left:964.2px;top:672.1px;width:12.4px;height:4px;background:#705da0;border-radius:2px;"></div>
<div class="a t" style="left:983.20px;top:666.20px;height:15px;line-height:15px;font-size:11px;color:#ccccdc;letter-spacing:0.298px;-webkit-text-stroke:0.2px #ccccdc;">kubernetes-services</div>
<div class="a" style="left:1096.7px;top:672.1px;width:12.4px;height:4px;background:#37872d;border-radius:2px;"></div>
<div class="a t" style="left:1115.70px;top:666.20px;height:15px;line-height:15px;font-size:11px;color:#ccccdc;letter-spacing:0.151px;-webkit-text-stroke:0.2px #ccccdc;">prometheus</div>
<div class="a" style="left:1184.7px;top:672.1px;width:12.4px;height:4px;background:#fade2a;border-radius:2px;"></div>
<div class="a t" style="left:1203.70px;top:666.20px;height:15px;line-height:15px;font-size:11px;color:#ccccdc;letter-spacing:0.242px;-webkit-text-stroke:0.2px #ccccdc;">prometheus-pushgateway</div>
<div class="a" style="left:291.5px;top:728.7px;width:654.5px;height:224.3px;background:#181b23;border:1px solid rgba(204,204,220,0.10);border-radius:2px;box-sizing:border-box;"></div>
<div class="a t" style="left:299.20px;top:734.70px;height:18px;line-height:18px;font-size:12.9px;color:#ccccdc;letter-spacing:0.176px;-webkit-text-stroke:0.45px #ccccdc;">Scrape Duration</div>
<div class="a t" style="left:329.19px;top:765.00px;height:15px;line-height:15px;font-size:11px;color:#ccccdc;letter-spacing:-0.106px;-webkit-text-stroke:0.2px #ccccdc;">0.014</div>
<div class="a t" style="left:329.43px;top:790.30px;height:15px;line-height:15px;font-size:11px;color:#ccccdc;letter-spacing:-0.166px;-webkit-text-stroke:0.2px #ccccdc;">0.012</div>
<div class="a t" style="left:335.94px;top:814.80px;height:15px;line-height:15px;font-size:11px;color:#ccccdc;letter-spacing:-0.355px;-webkit-text-stroke:0.2px #ccccdc;">0.01</div>
<div class="a t" style="left:327.99px;top:839.20px;height:15px;line-height:15px;font-size:11px;color:#ccccdc;letter-spacing:0.194px;-webkit-text-stroke:0.2px #ccccdc;">0.008</div>
<div class="a t" style="left:327.99px;top:863.30px;height:15px;line-height:15px;font-size:11px;color:#ccccdc;letter-spacing:0.194px;-webkit-text-stroke:0.2px #ccccdc;">0.006</div>
<div class="a t" style="left:244.2px;top:829px;width:120px;height:14px;line-height:14px;text-align:center;font-size:11px;color:#ccccdc;letter-spacing:-0.030px;-webkit-text-stroke:0.2px #ccccdc;transform:rotate(-90deg);">Seconds</div>
<div class="a" style="left:952.2px;top:728.7px;width:654.2px;height:224.3px;background:#181b23;border:1px solid rgba(204,204,220,0.10);border-radius:2px;box-sizing:border-box;"></div>
<div class="a t" style="left:959.90px;top:734.70px;height:18px;line-height:18px;font-size:12.9px;color:#ccccdc;letter-spacing:0.122px;-webkit-text-stroke:0.45px #ccccdc;">Rejected Scrapes</div>
<svg class="a" style="left:1077.3px;top:735.6px;" width="16" height="16" viewBox="-8 -8 16 16" fill="none"><circle r="5.4" stroke="#9596a3" stroke-width="1.2"/><path d="M0 -0.6V2.8" stroke="#9596a3" stroke-width="1.3" stroke-linecap="round"/><circle cy="-2.7" r="0.8" fill="#9596a3"/></svg>
<div class="a t" style="left:988.75px;top:764.60px;height:15px;line-height:15px;font-size:11px;color:#ccccdc;letter-spacing:-0.253px;-webkit-text-stroke:0.2px #ccccdc;">100</div>
<div class="a t" style="left:993.83px;top:789.90px;height:15px;line-height:15px;font-size:11px;color:#ccccdc;letter-spacing:0.525px;-webkit-text-stroke:0.2px #ccccdc;">80</div>
<div class="a t" style="left:993.83px;top:815.80px;height:15px;line-height:15px;font-size:11px;color:#ccccdc;letter-spacing:0.525px;-webkit-text-stroke:0.2px #ccccdc;">60</div>
<div class="a t" style="left:993.73px;top:841.30px;height:15px;line-height:15px;font-size:11px;color:#ccccdc;letter-spacing:0.625px;-webkit-text-stroke:0.2px #ccccdc;">40</div>
<div class="a t" style="left:993.83px;top:867.40px;height:15px;line-height:15px;font-size:11px;color:#ccccdc;letter-spacing:0.525px;-webkit-text-stroke:0.2px #ccccdc;">20</div>
<div class="a t" style="left:905.2px;top:829px;width:120px;height:14px;line-height:14px;text-align:center;font-size:11px;color:#ccccdc;letter-spacing:0.006px;-webkit-text-stroke:0.2px #ccccdc;transform:rotate(-90deg);">Scrapes</div>
<svg class="a" style="left:0;top:0;pointer-events:none" width="1640" height="901" viewBox="0 0 1640 901" fill="none"><path d="M356.2 251.5H600" stroke="rgba(204,204,220,0.11)" stroke-width="1"/><path d="M356.2 277.3H600" stroke="rgba(204,204,220,0.11)" stroke-width="1"/><path d="M356.2 303.2H600" stroke="rgba(204,204,220,0.11)" stroke-width="1"/><path d="M356.2 328.3H600" stroke="rgba(204,204,220,0.11)" stroke-width="1"/><path d="M397.2 240.2V337.6" stroke="rgba(204,204,220,0.11)" stroke-width="1"/><path d="M479.3 240.2V337.6" stroke="rgba(204,204,220,0.11)" stroke-width="1"/><path d="M560.3 240.2V337.6" stroke="rgba(204,204,220,0.11)" stroke-width="1"/><rect x="356.2" y="240.2" width="81.8" height="97.4" fill="rgba(40,95,42,0.2)"/><path d="M356.7 240.2V337.6" stroke="#1c6a36" stroke-width="1.25" stroke-opacity="0.85" stroke-dasharray="3.5 2.6"/><path d="M438 240.2V337.6" stroke="#1c6a36" stroke-width="1.25" stroke-opacity="0.85" stroke-dasharray="3.5 2.6"/><rect x="356.2" y="332.3" width="81.8" height="5.3" fill="#16801f"/><path d="M356.2 326.6 L360.3 324.9 L364.3 323.2 L368.4 321.5 L372.5 321.5 L376.5 319.7 L380.6 318.0 L384.6 316.3 L388.7 316.3 L392.8 314.6 L396.8 312.9 L400.9 311.2 L405.0 311.2 L409.0 309.4 L413.1 307.7 L417.1 306.0 L421.2 306.0 L425.3 304.3 L429.3 302.6 L433.4 300.9 L437.5 300.9 L441.5 299.2 L445.6 297.4 L449.7 295.7 L453.7 295.7 L457.8 294.0 L461.8 292.3 L465.9 290.6 L470.0 290.6 L474.0 288.9 L478.1 287.1 L482.2 285.4 L486.2 285.4 L490.3 283.7 L494.4 282.0 L498.4 280.3 L502.5 280.3 L506.5 278.6 L510.6 276.8 L514.7 275.1 L518.7 275.1 L522.8 273.4 L526.9 271.7 L530.9 270.0 L535.0 270.0 L539.0 268.3 L543.1 266.6 L547.2 264.8 L551.2 264.8 L555.3 263.1 L559.4 261.4 L563.4 259.7 L567.5 259.7 L571.6 258.0 L575.6 256.3 L579.7 254.5 L583.7 254.5 L587.8 252.8 L591.9 251.1 L595.9 249.4 L600.0 249.4" stroke="#73bf69" stroke-width="1.15" stroke-opacity="0.9" fill="none" stroke-linejoin="round"/><path d="M953.2 422.6 L957.8 342 L1272.8 342 L1272.8 422.6 Z" fill="#203a28"/><path d="M953.2 422.6 L957.8 342 L1272.8 342" stroke="#3c7d3e" stroke-width="1" fill="none"/><path d="M1283.3 422.6 L1287.6 343 L1604.6 343 L1604.6 422.6 Z" fill="#1b2e42"/><path d="M1283.3 422.6 L1287.6 343 L1604.6 343" stroke="#2b6aa3" stroke-width="1" fill="none"/><path d="M352.8 509.1H931.4" stroke="rgba(204,204,220,0.11)" stroke-width="1"/><path d="M352.8 531.5H931.4" stroke="rgba(204,204,220,0.11)" stroke-width="1"/><path d="M352.8 554H931.4" stroke="rgba(204,204,220,0.11)" stroke-width="1"/><path d="M352.8 576.5H931.4" stroke="rgba(204,204,220,0.11)" stroke-width="1"/><path d="M352.8 599H931.4" stroke="rgba(204,204,220,0.11)" stroke-width="1"/><path d="M450 505.2V603.2" stroke="rgba(204,204,220,0.11)" stroke-width="1"/><path d="M546.4 505.2V603.2" stroke="rgba(204,204,220,0.11)" stroke-width="1"/><path d="M643.4 505.2V603.2" stroke="rgba(204,204,220,0.11)" stroke-width="1"/><path d="M739.8 505.2V603.2" stroke="rgba(204,204,220,0.11)" stroke-width="1"/><path d="M836.3 505.2V603.2" stroke="rgba(204,204,220,0.11)" stroke-width="1"/><path d="M352.8 593.8 L362.5 593.8 L372.2 591.1 L381.8 591.1 L391.5 588.4 L401.2 588.4 L410.9 585.7 L420.5 585.7 L430.2 583.0 L439.9 583.0 L449.6 580.3 L459.2 580.3 L468.9 577.6 L478.6 577.6 L488.2 574.9 L497.9 574.9 L507.6 572.2 L517.3 572.2 L527.0 569.5 L536.6 569.5 L546.3 566.8 L556.0 566.8 L565.7 564.1 L575.3 564.1 L585.0 561.4 L594.7 561.4 L604.4 558.6 L614.0 558.6 L623.7 555.9 L633.4 555.9 L643.0 553.2 L652.7 553.2 L662.4 550.5 L672.1 550.5 L681.8 547.8 L691.4 547.8 L701.1 545.1 L710.8 545.1 L720.5 542.4 L730.1 542.4 L739.8 539.7 L749.5 539.7 L759.2 537.0 L768.8 537.0 L778.5 534.3 L788.2 534.3 L797.9 531.6 L807.5 531.6 L817.2 528.9 L826.9 528.9 L836.6 526.2 L846.2 526.2 L855.9 523.5 L865.6 523.5 L875.2 520.8 L884.9 520.8 L894.6 518.1 L904.3 518.1 L914.0 515.4 L923.6 515.4 L923.6 599 L352.8 599 Z" fill="rgb(131,118,96)" fill-opacity="0.93"/><path d="M352.8 593.8 L362.5 593.8 L372.2 591.1 L381.8 591.1 L391.5 588.4 L401.2 588.4 L410.9 585.7 L420.5 585.7 L430.2 583.0 L439.9 583.0 L449.6 580.3 L459.2 580.3 L468.9 577.6 L478.6 577.6 L488.2 574.9 L497.9 574.9 L507.6 572.2 L517.3 572.2 L527.0 569.5 L536.6 569.5 L546.3 566.8 L556.0 566.8 L565.7 564.1 L575.3 564.1 L585.0 561.4 L594.7 561.4 L604.4 558.6 L614.0 558.6 L623.7 555.9 L633.4 555.9 L643.0 553.2 L652.7 553.2 L662.4 550.5 L672.1 550.5 L681.8 547.8 L691.4 547.8 L701.1 545.1 L710.8 545.1 L720.5 542.4 L730.1 542.4 L739.8 539.7 L749.5 539.7 L759.2 537.0 L768.8 537.0 L778.5 534.3 L788.2 534.3 L797.9 531.6 L807.5 531.6 L817.2 528.9 L826.9 528.9 L836.6 526.2 L846.2 526.2 L855.9 523.5 L865.6 523.5 L875.2 520.8 L884.9 520.8 L894.6 518.1 L904.3 518.1 L914.0 515.4 L923.6 515.4" stroke="#ddd05a" stroke-width="1.15" fill="none" stroke-linejoin="round"/><rect x="352.8" y="505.2" width="193.6" height="98" fill="rgba(40,95,42,0.2)"/><path d="M353.3 505.2V603.2" stroke="#1c6a36" stroke-width="1.25" stroke-opacity="0.85" stroke-dasharray="3.5 2.6"/><path d="M546.4 505.2V603.2" stroke="#1c6a36" stroke-width="1.25" stroke-opacity="0.85" stroke-dasharray="3.5 2.6"/><rect x="352.8" y="597.9" width="193.6" height="5.3" fill="#16801f"/><path d="M1010.6 524.1H1592" stroke="rgba(204,204,220,0.11)" stroke-width="1"/><path d="M1010.6 548.9H1592" stroke="rgba(204,204,220,0.11)" stroke-width="1"/><path d="M1010.6 573.8H1592" stroke="rgba(204,204,220,0.11)" stroke-width="1"/><path d="M1010.6 598.6H1592" stroke="rgba(204,204,220,0.11)" stroke-width="1"/><path d="M1108 505.2V602.6" stroke="rgba(204,204,220,0.11)" stroke-width="1"/><path d="M1205.2 505.2V602.6" stroke="rgba(204,204,220,0.11)" stroke-width="1"/><path d="M1303 505.2V602.6" stroke="rgba(204,204,220,0.11)" stroke-width="1"/><path d="M1400 505.2V602.6" stroke="rgba(204,204,220,0.11)" stroke-width="1"/><path d="M1497 505.2V602.6" stroke="rgba(204,204,220,0.11)" stroke-width="1"/><path d="M1010.6 578.1 L1020.3 578.1 L1030.0 538.4 L1039.8 531.9 L1049.5 516.6 L1059.2 516.6 L1068.9 551.8 L1078.6 551.8 L1088.4 578.1 L1098.1 579.3 L1107.8 571.6 L1117.5 572.3 L1127.2 569.8 L1137.0 569.8 L1146.7 580.0 L1156.4 580.0 L1166.1 569.8 L1175.8 568.8 L1185.6 567.8 L1195.3 567.2 L1205.0 580.7 L1214.7 582.0 L1224.4 578.7 L1234.2 578.7 L1243.9 566.6 L1253.6 566.6 L1263.3 572.5 L1273.0 572.5 L1282.8 580.0 L1292.5 580.0 L1302.2 562.6 L1311.9 562.6 L1321.6 580.0 L1331.4 580.0 L1341.1 579.3 L1350.8 579.3 L1360.5 582.5 L1370.2 582.5 L1380.0 581.2 L1389.7 581.2 L1399.4 581.2 L1409.1 581.2 L1418.8 580.6 L1428.6 580.6 L1438.3 584.6 L1448.0 584.6 L1457.7 580.3 L1467.4 580.3 L1477.2 565.9 L1486.9 565.9 L1496.6 580.6 L1506.3 580.6 L1516.0 580.6 L1525.8 580.6 L1535.5 566.6 L1545.2 566.6 L1554.9 583.8 L1564.6 583.8 L1574.4 580.6 L1584.1 580.6 L1584.1 598.6 L1010.6 598.6 Z" fill="#5794f2" fill-opacity="0.17"/><path d="M1010.6 578.1 L1020.3 578.1 L1030.0 538.4 L1039.8 531.9 L1049.5 516.6 L1059.2 516.6 L1068.9 551.8 L1078.6 551.8 L1088.4 578.1 L1098.1 579.3 L1107.8 571.6 L1117.5 572.3 L1127.2 569.8 L1137.0 569.8 L1146.7 580.0 L1156.4 580.0 L1166.1 569.8 L1175.8 568.8 L1185.6 567.8 L1195.3 567.2 L1205.0 580.7 L1214.7 582.0 L1224.4 578.7 L1234.2 578.7 L1243.9 566.6 L1253.6 566.6 L1263.3 572.5 L1273.0 572.5 L1282.8 580.0 L1292.5 580.0 L1302.2 562.6 L1311.9 562.6 L1321.6 580.0 L1331.4 580.0 L1341.1 579.3 L1350.8 579.3 L1360.5 582.5 L1370.2 582.5 L1380.0 581.2 L1389.7 581.2 L1399.4 581.2 L1409.1 581.2 L1418.8 580.6 L1428.6 580.6 L1438.3 584.6 L1448.0 584.6 L1457.7 580.3 L1467.4 580.3 L1477.2 565.9 L1486.9 565.9 L1496.6 580.6 L1506.3 580.6 L1516.0 580.6 L1525.8 580.6 L1535.5 566.6 L1545.2 566.6 L1554.9 583.8 L1564.6 583.8 L1574.4 580.6 L1584.1 580.6" stroke="#5794f2" stroke-width="1.25" stroke-opacity="0.9" fill="none" stroke-linejoin="round"/><path d="M1010.6 588.7 L1020.3 588.7 L1030.0 588.7 L1039.8 588.7 L1049.5 588.7 L1059.2 588.7 L1068.9 588.7 L1078.6 588.7 L1088.4 588.7 L1098.1 588.7 L1107.8 572.5 L1117.5 572.5 L1127.2 570.7 L1137.0 570.7 L1146.7 588.7 L1156.4 588.7 L1166.1 588.7 L1175.8 588.7 L1185.6 588.7 L1195.3 588.7 L1205.0 588.7 L1214.7 588.7 L1224.4 588.7 L1234.2 588.7 L1243.9 588.7 L1253.6 588.7 L1263.3 588.7 L1273.0 588.7 L1282.8 588.7 L1292.5 588.7 L1302.2 588.7 L1311.9 588.7 L1321.6 588.7 L1331.4 588.7 L1341.1 588.7 L1350.8 588.7 L1360.5 588.7 L1370.2 588.7 L1380.0 588.7 L1389.7 588.7 L1399.4 588.7 L1409.1 588.7 L1418.8 588.7 L1428.6 588.7 L1438.3 588.7 L1448.0 588.7 L1457.7 588.7 L1467.4 588.7 L1477.2 588.7 L1486.9 588.7 L1496.6 588.7 L1506.3 588.7 L1516.0 588.7 L1525.8 588.7 L1535.5 583.7 L1545.2 583.7 L1554.9 588.7 L1564.6 588.7 L1574.4 588.7 L1584.1 588.7 L1584.1 598.6 L1010.6 598.6 Z" fill="#73bf69" fill-opacity="0.07"/><path d="M1010.6 588.7 L1020.3 588.7 L1030.0 588.7 L1039.8 588.7 L1049.5 588.7 L1059.2 588.7 L1068.9 588.7 L1078.6 588.7 L1088.4 588.7 L1098.1 588.7 L1107.8 572.5 L1117.5 572.5 L1127.2 570.7 L1137.0 570.7 L1146.7 588.7 L1156.4 588.7 L1166.1 588.7 L1175.8 588.7 L1185.6 588.7 L1195.3 588.7 L1205.0 588.7 L1214.7 588.7 L1224.4 588.7 L1234.2 588.7 L1243.9 588.7 L1253.6 588.7 L1263.3 588.7 L1273.0 588.7 L1282.8 588.7 L1292.5 588.7 L1302.2 588.7 L1311.9 588.7 L1321.6 588.7 L1331.4 588.7 L1341.1 588.7 L1350.8 588.7 L1360.5 588.7 L1370.2 588.7 L1380.0 588.7 L1389.7 588.7 L1399.4 588.7 L1409.1 588.7 L1418.8 588.7 L1428.6 588.7 L1438.3 588.7 L1448.0 588.7 L1457.7 588.7 L1467.4 588.7 L1477.2 588.7 L1486.9 588.7 L1496.6 588.7 L1506.3 588.7 L1516.0 588.7 L1525.8 588.7 L1535.5 583.7 L1545.2 583.7 L1554.9 588.7 L1564.6 588.7 L1574.4 588.7 L1584.1 588.7" stroke="#73bf69" stroke-width="1" stroke-opacity="0.65" fill="none" stroke-linejoin="round"/><path d="M1010.6 584.3 L1020.3 584.3 L1030.0 560.1 L1039.8 558.9 L1049.5 547.7 L1059.2 547.7 L1068.9 584.3 L1078.6 594.3 L1088.4 594.3 L1098.1 594.3 L1107.8 594.3 L1117.5 594.3 L1127.2 594.3 L1137.0 594.3 L1146.7 594.3 L1156.4 594.3 L1166.1 594.3 L1175.8 594.3 L1185.6 594.3 L1195.3 594.3 L1205.0 594.3 L1214.7 594.3 L1224.4 594.3 L1234.2 594.3 L1243.9 594.3 L1253.6 594.3 L1263.3 594.3 L1273.0 594.3 L1282.8 594.3 L1292.5 594.3 L1302.2 594.3 L1311.9 594.3 L1321.6 594.3 L1331.4 594.3 L1341.1 594.3 L1350.8 594.3 L1360.5 594.3 L1370.2 594.3 L1380.0 594.3 L1389.7 594.3 L1399.4 583.2 L1409.1 583.2 L1418.8 594.3 L1428.6 594.3 L1438.3 594.3 L1448.0 594.3 L1457.7 594.3 L1467.4 594.3 L1477.2 594.3 L1486.9 594.3 L1496.6 594.3 L1506.3 594.3 L1516.0 594.3 L1525.8 594.3 L1535.5 594.3 L1545.2 594.3 L1554.9 594.3 L1564.6 594.3 L1574.4 594.3 L1584.1 594.3 L1584.1 598.6 L1010.6 598.6 Z" fill="#73bf69" fill-opacity="0.1"/><path d="M1010.6 584.3 L1020.3 584.3 L1030.0 560.1 L1039.8 558.9 L1049.5 547.7 L1059.2 547.7 L1068.9 584.3 L1078.6 594.3 L1088.4 594.3 L1098.1 594.3 L1107.8 594.3 L1117.5 594.3 L1127.2 594.3 L1137.0 594.3 L1146.7 594.3 L1156.4 594.3 L1166.1 594.3 L1175.8 594.3 L1185.6 594.3 L1195.3 594.3 L1205.0 594.3 L1214.7 594.3 L1224.4 594.3 L1234.2 594.3 L1243.9 594.3 L1253.6 594.3 L1263.3 594.3 L1273.0 594.3 L1282.8 594.3 L1292.5 594.3 L1302.2 594.3 L1311.9 594.3 L1321.6 594.3 L1331.4 594.3 L1341.1 594.3 L1350.8 594.3 L1360.5 594.3 L1370.2 594.3 L1380.0 594.3 L1389.7 594.3 L1399.4 583.2 L1409.1 583.2 L1418.8 594.3 L1428.6 594.3 L1438.3 594.3 L1448.0 594.3 L1457.7 594.3 L1467.4 594.3 L1477.2 594.3 L1486.9 594.3 L1496.6 594.3 L1506.3 594.3 L1516.0 594.3 L1525.8 594.3 L1535.5 594.3 L1545.2 594.3 L1554.9 594.3 L1564.6 594.3 L1574.4 594.3 L1584.1 594.3" stroke="#73bf69" stroke-width="1.1" stroke-opacity="0.8" fill="none" stroke-linejoin="round"/><path d="M1010.6 586.2 L1020.3 586.2 L1030.0 573.8 L1039.8 573.8 L1049.5 560.1 L1059.2 560.1 L1068.9 584.3 L1078.6 584.3 L1088.4 584.3 L1098.1 584.3 L1107.8 584.3 L1117.5 584.3 L1127.2 584.3 L1137.0 584.3 L1146.7 584.3 L1156.4 584.3 L1166.1 573.8 L1175.8 573.8 L1185.6 584.3 L1195.3 584.3 L1205.0 584.3 L1214.7 584.3 L1224.4 583.9 L1234.2 583.9 L1243.9 583.9 L1253.6 582.5 L1263.3 582.5 L1273.0 582.5 L1282.8 583.7 L1292.5 583.7 L1302.2 583.7 L1311.9 584.3 L1321.6 584.9 L1331.4 584.9 L1341.1 585.6 L1350.8 585.6 L1360.5 586.2 L1370.2 586.2 L1380.0 585.6 L1389.7 585.6 L1399.4 573.0 L1409.1 573.0 L1418.8 585.6 L1428.6 585.6 L1438.3 588.0 L1448.0 588.0 L1457.7 585.6 L1467.4 585.6 L1477.2 570.4 L1486.9 570.4 L1496.6 586.2 L1506.3 586.2 L1516.0 585.6 L1525.8 585.6 L1535.5 584.9 L1545.2 584.9 L1554.9 587.4 L1564.6 587.4 L1574.4 584.9 L1584.1 584.9 L1584.1 598.6 L1010.6 598.6 Z" fill="#705da0" fill-opacity="0.13"/><path d="M1010.6 586.2 L1020.3 586.2 L1030.0 573.8 L1039.8 573.8 L1049.5 560.1 L1059.2 560.1 L1068.9 584.3 L1078.6 584.3 L1088.4 584.3 L1098.1 584.3 L1107.8 584.3 L1117.5 584.3 L1127.2 584.3 L1137.0 584.3 L1146.7 584.3 L1156.4 584.3 L1166.1 573.8 L1175.8 573.8 L1185.6 584.3 L1195.3 584.3 L1205.0 584.3 L1214.7 584.3 L1224.4 583.9 L1234.2 583.9 L1243.9 583.9 L1253.6 582.5 L1263.3 582.5 L1273.0 582.5 L1282.8 583.7 L1292.5 583.7 L1302.2 583.7 L1311.9 584.3 L1321.6 584.9 L1331.4 584.9 L1341.1 585.6 L1350.8 585.6 L1360.5 586.2 L1370.2 586.2 L1380.0 585.6 L1389.7 585.6 L1399.4 573.0 L1409.1 573.0 L1418.8 585.6 L1428.6 585.6 L1438.3 588.0 L1448.0 588.0 L1457.7 585.6 L1467.4 585.6 L1477.2 570.4 L1486.9 570.4 L1496.6 586.2 L1506.3 586.2 L1516.0 585.6 L1525.8 585.6 L1535.5 584.9 L1545.2 584.9 L1554.9 587.4 L1564.6 587.4 L1574.4 584.9 L1584.1 584.9" stroke="#705da0" stroke-width="1.1" stroke-opacity="0.85" fill="none" stroke-linejoin="round"/><path d="M1010.6 589.9 L1020.3 589.9 L1030.0 581.2 L1039.8 581.2 L1049.5 567.6 L1059.2 567.6 L1068.9 591.1 L1078.6 591.1 L1088.4 582.0 L1098.1 582.0 L1107.8 591.1 L1117.5 591.1 L1127.2 591.1 L1137.0 591.1 L1146.7 580.0 L1156.4 580.0 L1166.1 591.1 L1175.8 591.1 L1185.6 591.1 L1195.3 591.1 L1205.0 580.0 L1214.7 580.0 L1224.4 591.5 L1234.2 591.5 L1243.9 591.5 L1253.6 591.5 L1263.3 591.5 L1273.0 591.5 L1282.8 591.5 L1292.5 591.5 L1302.2 591.1 L1311.9 591.1 L1321.6 591.1 L1331.4 591.1 L1341.1 591.5 L1350.8 591.5 L1360.5 591.5 L1370.2 591.5 L1380.0 591.5 L1389.7 591.5 L1399.4 591.5 L1409.1 591.5 L1418.8 591.5 L1428.6 591.5 L1438.3 592.4 L1448.0 592.4 L1457.7 591.1 L1467.4 591.1 L1477.2 589.3 L1486.9 589.3 L1496.6 591.1 L1506.3 591.1 L1516.0 591.1 L1525.8 591.1 L1535.5 583.1 L1545.2 583.1 L1554.9 591.1 L1564.6 591.1 L1574.4 591.1 L1584.1 591.1 L1584.1 598.6 L1010.6 598.6 Z" fill="#ff780a" fill-opacity="0.1"/><path d="M1010.6 589.9 L1020.3 589.9 L1030.0 581.2 L1039.8 581.2 L1049.5 567.6 L1059.2 567.6 L1068.9 591.1 L1078.6 591.1 L1088.4 582.0 L1098.1 582.0 L1107.8 591.1 L1117.5 591.1 L1127.2 591.1 L1137.0 591.1 L1146.7 580.0 L1156.4 580.0 L1166.1 591.1 L1175.8 591.1 L1185.6 591.1 L1195.3 591.1 L1205.0 580.0 L1214.7 580.0 L1224.4 591.5 L1234.2 591.5 L1243.9 591.5 L1253.6 591.5 L1263.3 591.5 L1273.0 591.5 L1282.8 591.5 L1292.5 591.5 L1302.2 591.1 L1311.9 591.1 L1321.6 591.1 L1331.4 591.1 L1341.1 591.5 L1350.8 591.5 L1360.5 591.5 L1370.2 591.5 L1380.0 591.5 L1389.7 591.5 L1399.4 591.5 L1409.1 591.5 L1418.8 591.5 L1428.6 591.5 L1438.3 592.4 L1448.0 592.4 L1457.7 591.1 L1467.4 591.1 L1477.2 589.3 L1486.9 589.3 L1496.6 591.1 L1506.3 591.1 L1516.0 591.1 L1525.8 591.1 L1535.5 583.1 L1545.2 583.1 L1554.9 591.1 L1564.6 591.1 L1574.4 591.1 L1584.1 591.1" stroke="#ff780a" stroke-width="1" stroke-opacity="0.72" fill="none" stroke-linejoin="round"/><path d="M1010.6 591.1 L1020.3 591.1 L1030.0 579.3 L1039.8 579.3 L1049.5 591.1 L1059.2 591.1 L1068.9 591.8 L1078.6 591.8 L1088.4 591.8 L1098.1 591.8 L1107.8 591.8 L1117.5 591.8 L1127.2 591.8 L1137.0 591.8 L1146.7 591.8 L1156.4 591.8 L1166.1 591.8 L1175.8 591.8 L1185.6 591.8 L1195.3 591.8 L1205.0 591.8 L1214.7 591.8 L1224.4 591.8 L1234.2 591.8 L1243.9 591.8 L1253.6 581.8 L1263.3 581.8 L1273.0 581.8 L1282.8 591.8 L1292.5 591.8 L1302.2 591.8 L1311.9 591.8 L1321.6 591.8 L1331.4 591.8 L1341.1 591.8 L1350.8 591.8 L1360.5 591.8 L1370.2 591.8 L1380.0 591.8 L1389.7 591.8 L1399.4 591.8 L1409.1 591.8 L1418.8 591.8 L1428.6 591.8 L1438.3 591.8 L1448.0 591.8 L1457.7 591.8 L1467.4 591.8 L1477.2 591.8 L1486.9 591.8 L1496.6 591.8 L1506.3 591.8 L1516.0 591.8 L1525.8 591.8 L1535.5 591.8 L1545.2 591.8 L1554.9 591.8 L1564.6 591.8 L1574.4 591.8 L1584.1 591.8 L1584.1 598.6 L1010.6 598.6 Z" fill="#f2495c" fill-opacity="0.1"/><path d="M1010.6 591.1 L1020.3 591.1 L1030.0 579.3 L1039.8 579.3 L1049.5 591.1 L1059.2 591.1 L1068.9 591.8 L1078.6 591.8 L1088.4 591.8 L1098.1 591.8 L1107.8 591.8 L1117.5 591.8 L1127.2 591.8 L1137.0 591.8 L1146.7 591.8 L1156.4 591.8 L1166.1 591.8 L1175.8 591.8 L1185.6 591.8 L1195.3 591.8 L1205.0 591.8 L1214.7 591.8 L1224.4 591.8 L1234.2 591.8 L1243.9 591.8 L1253.6 581.8 L1263.3 581.8 L1273.0 581.8 L1282.8 591.8 L1292.5 591.8 L1302.2 591.8 L1311.9 591.8 L1321.6 591.8 L1331.4 591.8 L1341.1 591.8 L1350.8 591.8 L1360.5 591.8 L1370.2 591.8 L1380.0 591.8 L1389.7 591.8 L1399.4 591.8 L1409.1 591.8 L1418.8 591.8 L1428.6 591.8 L1438.3 591.8 L1448.0 591.8 L1457.7 591.8 L1467.4 591.8 L1477.2 591.8 L1486.9 591.8 L1496.6 591.8 L1506.3 591.8 L1516.0 591.8 L1525.8 591.8 L1535.5 591.8 L1545.2 591.8 L1554.9 591.8 L1564.6 591.8 L1574.4 591.8 L1584.1 591.8" stroke="#f2495c" stroke-width="1" stroke-opacity="0.72" fill="none" stroke-linejoin="round"/><path d="M1010.6 587.7 L1020.3 587.7 L1030.0 575.3 L1039.8 575.3 L1049.5 561.6 L1059.2 561.6 L1068.9 585.8 L1078.6 585.8 L1088.4 585.8 L1098.1 585.8 L1107.8 585.8 L1117.5 585.8 L1127.2 585.8 L1137.0 585.8 L1146.7 585.8 L1156.4 585.8 L1166.1 575.3 L1175.8 575.3 L1185.6 585.8 L1195.3 585.8 L1205.0 585.8 L1214.7 585.8 L1224.4 585.4 L1234.2 585.4 L1243.9 585.4 L1253.6 583.9 L1263.3 583.9 L1273.0 583.9 L1282.8 585.2 L1292.5 585.2 L1302.2 585.2 L1311.9 585.8 L1321.6 586.4 L1331.4 586.4 L1341.1 587.0 L1350.8 587.0 L1360.5 587.7 L1370.2 587.7 L1380.0 587.0 L1389.7 587.0 L1399.4 574.5 L1409.1 574.5 L1418.8 587.0 L1428.6 587.0 L1438.3 589.5 L1448.0 589.5 L1457.7 587.0 L1467.4 587.0 L1477.2 571.9 L1486.9 571.9 L1496.6 587.7 L1506.3 587.7 L1516.0 587.0 L1525.8 587.0 L1535.5 586.4 L1545.2 586.4 L1554.9 588.9 L1564.6 588.9 L1574.4 586.4 L1584.1 586.4" stroke="#b877d9" stroke-width="1.1" stroke-opacity="0.8" fill="none" stroke-linejoin="round"/><path d="M1010.6 593.0 L1020.3 593.0 L1030.0 593.0 L1039.8 593.0 L1049.5 584.3 L1059.2 584.3 L1068.9 593.6 L1078.6 593.6 L1088.4 580.7 L1098.1 580.7 L1107.8 593.6 L1117.5 593.6 L1127.2 582.5 L1137.0 582.5 L1146.7 593.6 L1156.4 593.6 L1166.1 593.6 L1175.8 593.6 L1185.6 593.6 L1195.3 593.6 L1205.0 593.6 L1214.7 593.6 L1224.4 593.6 L1234.2 593.6 L1243.9 580.7 L1253.6 580.7 L1263.3 593.6 L1273.0 593.6 L1282.8 582.5 L1292.5 582.5 L1302.2 593.6 L1311.9 593.6 L1321.6 593.6 L1331.4 593.6 L1341.1 593.6 L1350.8 593.6 L1360.5 593.6 L1370.2 593.6 L1380.0 593.6 L1389.7 593.6 L1399.4 593.6 L1409.1 593.6 L1418.8 593.6 L1428.6 593.6 L1438.3 593.6 L1448.0 593.6 L1457.7 593.6 L1467.4 593.6 L1477.2 591.8 L1486.9 591.8 L1496.6 593.6 L1506.3 593.6 L1516.0 593.6 L1525.8 593.6 L1535.5 593.6 L1545.2 593.6 L1554.9 593.6 L1564.6 593.6 L1574.4 593.6 L1584.1 593.6 L1584.1 598.6 L1010.6 598.6 Z" fill="#f2cc0c" fill-opacity="0.08"/><path d="M1010.6 593.0 L1020.3 593.0 L1030.0 593.0 L1039.8 593.0 L1049.5 584.3 L1059.2 584.3 L1068.9 593.6 L1078.6 593.6 L1088.4 580.7 L1098.1 580.7 L1107.8 593.6 L1117.5 593.6 L1127.2 582.5 L1137.0 582.5 L1146.7 593.6 L1156.4 593.6 L1166.1 593.6 L1175.8 593.6 L1185.6 593.6 L1195.3 593.6 L1205.0 593.6 L1214.7 593.6 L1224.4 593.6 L1234.2 593.6 L1243.9 580.7 L1253.6 580.7 L1263.3 593.6 L1273.0 593.6 L1282.8 582.5 L1292.5 582.5 L1302.2 593.6 L1311.9 593.6 L1321.6 593.6 L1331.4 593.6 L1341.1 593.6 L1350.8 593.6 L1360.5 593.6 L1370.2 593.6 L1380.0 593.6 L1389.7 593.6 L1399.4 593.6 L1409.1 593.6 L1418.8 593.6 L1428.6 593.6 L1438.3 593.6 L1448.0 593.6 L1457.7 593.6 L1467.4 593.6 L1477.2 591.8 L1486.9 591.8 L1496.6 593.6 L1506.3 593.6 L1516.0 593.6 L1525.8 593.6 L1535.5 593.6 L1545.2 593.6 L1554.9 593.6 L1564.6 593.6 L1574.4 593.6 L1584.1 593.6" stroke="#f2cc0c" stroke-width="1" stroke-opacity="0.7" fill="none" stroke-linejoin="round"/><path d="M1010.6 594.9 L1020.3 594.9 L1030.0 593.0 L1039.8 593.0 L1049.5 594.9 L1059.2 594.9 L1068.9 594.9 L1078.6 594.9 L1088.4 594.9 L1098.1 594.9 L1107.8 594.9 L1117.5 594.9 L1127.2 594.9 L1137.0 594.9 L1146.7 594.9 L1156.4 594.9 L1166.1 594.9 L1175.8 594.9 L1185.6 594.9 L1195.3 594.9 L1205.0 594.9 L1214.7 594.9 L1224.4 594.9 L1234.2 594.9 L1243.9 594.9 L1253.6 594.9 L1263.3 594.9 L1273.0 594.9 L1282.8 594.9 L1292.5 594.9 L1302.2 594.9 L1311.9 594.9 L1321.6 594.9 L1331.4 594.9 L1341.1 594.9 L1350.8 594.9 L1360.5 594.9 L1370.2 594.9 L1380.0 594.9 L1389.7 594.9 L1399.4 594.9 L1409.1 594.9 L1418.8 594.9 L1428.6 594.9 L1438.3 594.9 L1448.0 594.9 L1457.7 594.9 L1467.4 594.9 L1477.2 594.9 L1486.9 594.9 L1496.6 594.9 L1506.3 594.9 L1516.0 594.9 L1525.8 594.9 L1535.5 594.9 L1545.2 594.9 L1554.9 594.9 L1564.6 594.9 L1574.4 594.9 L1584.1 594.9 L1584.1 598.6 L1010.6 598.6 Z" fill="#fade2a" fill-opacity="0.06"/><path d="M1010.6 594.9 L1020.3 594.9 L1030.0 593.0 L1039.8 593.0 L1049.5 594.9 L1059.2 594.9 L1068.9 594.9 L1078.6 594.9 L1088.4 594.9 L1098.1 594.9 L1107.8 594.9 L1117.5 594.9 L1127.2 594.9 L1137.0 594.9 L1146.7 594.9 L1156.4 594.9 L1166.1 594.9 L1175.8 594.9 L1185.6 594.9 L1195.3 594.9 L1205.0 594.9 L1214.7 594.9 L1224.4 594.9 L1234.2 594.9 L1243.9 594.9 L1253.6 594.9 L1263.3 594.9 L1273.0 594.9 L1282.8 594.9 L1292.5 594.9 L1302.2 594.9 L1311.9 594.9 L1321.6 594.9 L1331.4 594.9 L1341.1 594.9 L1350.8 594.9 L1360.5 594.9 L1370.2 594.9 L1380.0 594.9 L1389.7 594.9 L1399.4 594.9 L1409.1 594.9 L1418.8 594.9 L1428.6 594.9 L1438.3 594.9 L1448.0 594.9 L1457.7 594.9 L1467.4 594.9 L1477.2 594.9 L1486.9 594.9 L1496.6 594.9 L1506.3 594.9 L1516.0 594.9 L1525.8 594.9 L1535.5 594.9 L1545.2 594.9 L1554.9 594.9 L1564.6 594.9 L1574.4 594.9 L1584.1 594.9" stroke="#fade2a" stroke-width="0.9" stroke-opacity="0.45" fill="none" stroke-linejoin="round"/><path d="M1010.6 596.1 L1020.3 596.1 L1030.0 596.1 L1039.8 596.1 L1049.5 596.1 L1059.2 596.1 L1068.9 596.1 L1078.6 596.1 L1088.4 596.1 L1098.1 596.1 L1107.8 596.1 L1117.5 596.1 L1127.2 596.1 L1137.0 596.1 L1146.7 596.1 L1156.4 596.1 L1166.1 596.1 L1175.8 596.1 L1185.6 596.1 L1195.3 596.1 L1205.0 596.1 L1214.7 596.1 L1224.4 596.1 L1234.2 596.1 L1243.9 596.1 L1253.6 596.1 L1263.3 596.1 L1273.0 596.1 L1282.8 596.1 L1292.5 596.1 L1302.2 596.1 L1311.9 596.1 L1321.6 596.1 L1331.4 596.1 L1341.1 596.1 L1350.8 596.1 L1360.5 596.1 L1370.2 596.1 L1380.0 596.1 L1389.7 596.1 L1399.4 596.1 L1409.1 596.1 L1418.8 596.1 L1428.6 596.1 L1438.3 596.1 L1448.0 596.1 L1457.7 596.1 L1467.4 596.1 L1477.2 596.1 L1486.9 596.1 L1496.6 596.1 L1506.3 596.1 L1516.0 596.1 L1525.8 596.1 L1535.5 596.1 L1545.2 596.1 L1554.9 596.1 L1564.6 596.1 L1574.4 596.1 L1584.1 596.1 L1584.1 598.6 L1010.6 598.6 Z" fill="#c9cbd6" fill-opacity="0.1"/><path d="M1010.6 596.1 L1020.3 596.1 L1030.0 596.1 L1039.8 596.1 L1049.5 596.1 L1059.2 596.1 L1068.9 596.1 L1078.6 596.1 L1088.4 596.1 L1098.1 596.1 L1107.8 596.1 L1117.5 596.1 L1127.2 596.1 L1137.0 596.1 L1146.7 596.1 L1156.4 596.1 L1166.1 596.1 L1175.8 596.1 L1185.6 596.1 L1195.3 596.1 L1205.0 596.1 L1214.7 596.1 L1224.4 596.1 L1234.2 596.1 L1243.9 596.1 L1253.6 596.1 L1263.3 596.1 L1273.0 596.1 L1282.8 596.1 L1292.5 596.1 L1302.2 596.1 L1311.9 596.1 L1321.6 596.1 L1331.4 596.1 L1341.1 596.1 L1350.8 596.1 L1360.5 596.1 L1370.2 596.1 L1380.0 596.1 L1389.7 596.1 L1399.4 596.1 L1409.1 596.1 L1418.8 596.1 L1428.6 596.1 L1438.3 596.1 L1448.0 596.1 L1457.7 596.1 L1467.4 596.1 L1477.2 596.1 L1486.9 596.1 L1496.6 596.1 L1506.3 596.1 L1516.0 596.1 L1525.8 596.1 L1535.5 596.1 L1545.2 596.1 L1554.9 596.1 L1564.6 596.1 L1574.4 596.1 L1584.1 596.1" stroke="#c9cbd6" stroke-width="1" stroke-opacity="0.6" fill="none" stroke-linejoin="round"/><rect x="1010.6" y="505.2" width="194.6" height="97.4" fill="rgba(40,95,42,0.2)"/><path d="M1011.1 505.2V602.6" stroke="#1c6a36" stroke-width="1.25" stroke-opacity="0.85" stroke-dasharray="3.5 2.6"/><path d="M1205.2 505.2V602.6" stroke="#1c6a36" stroke-width="1.25" stroke-opacity="0.85" stroke-dasharray="3.5 2.6"/><rect x="1010.6" y="597.3" width="194.6" height="5.3" fill="#16801f"/><path d="M362.4 772.4H931.7" stroke="rgba(204,204,220,0.11)" stroke-width="1"/><path d="M362.4 797.5H931.7" stroke="rgba(204,204,220,0.11)" stroke-width="1"/><path d="M362.4 822H931.7" stroke="rgba(204,204,220,0.11)" stroke-width="1"/><path d="M362.4 846.4H931.7" stroke="rgba(204,204,220,0.11)" stroke-width="1"/><path d="M362.4 870.5H931.7" stroke="rgba(204,204,220,0.11)" stroke-width="1"/><path d="M457.5 769.2V900" stroke="rgba(204,204,220,0.11)" stroke-width="1"/><path d="M552.5 769.2V900" stroke="rgba(204,204,220,0.11)" stroke-width="1"/><path d="M647.5 769.2V900" stroke="rgba(204,204,220,0.11)" stroke-width="1"/><path d="M743.3 769.2V900" stroke="rgba(204,204,220,0.11)" stroke-width="1"/><path d="M837.8 769.2V900" stroke="rgba(204,204,220,0.11)" stroke-width="1"/><path d="M361.4 846.9 L363.5 868.4 L371.9 868.4 L382.0 842.2 L391.1 842.2 L400.6 865.9 L410.5 865.9 L420.0 804.0 L429.5 804.0 L438.3 884.8 L449.1 884.8 L458.0 798.4 L467.5 798.4 L476.9 871.8 L488.5 871.8 L495.9 871.1 L506.5 871.3 L514.9 872.2 L524.4 872.2 L533.9 867.5 L543.4 867.5 L552.5 863.3 L562.4 863.3 L571.9 845.8 L581.4 845.8 L590.8 858.0 L600.3 858.0 L609.8 783.2 L610.0 783.2 L619.5 783.2 L629.0 791.0 L638.5 791.0 L648.0 856.4 L656.8 856.4 L666.5 863.3 L676.4 863.3 L685.9 812.7 L695.0 812.7 L704.5 792.0 L714.4 792.0 L723.9 848.3 L733.0 848.3 L742.5 852.6 L752.4 852.6 L761.9 837.4 L771.4 837.4 L780.4 863.3 L789.9 863.3 L799.8 800.5 L808.9 800.5 L818.8 809.5 L828.3 809.5 L837.4 879.6 L847.3 879.6 L856.8 857.4 L865.9 857.4 L875.8 872.2 L884.8 872.2 L894.8 791.0 L904.2 791.0 L913.7 875.8 L923.2 875.8 L923.2 900 L362.4 900 Z" fill="#73bf69" fill-opacity="0.11"/><path d="M361.4 846.9 L363.5 868.4 L371.9 868.4 L382.0 842.2 L391.1 842.2 L400.6 865.9 L410.5 865.9 L420.0 804.0 L429.5 804.0 L438.3 884.8 L449.1 884.8 L458.0 798.4 L467.5 798.4 L476.9 871.8 L488.5 871.8 L495.9 871.1 L506.5 871.3 L514.9 872.2 L524.4 872.2 L533.9 867.5 L543.4 867.5 L552.5 863.3 L562.4 863.3 L571.9 845.8 L581.4 845.8 L590.8 858.0 L600.3 858.0 L609.8 783.2 L610.0 783.2 L619.5 783.2 L629.0 791.0 L638.5 791.0 L648.0 856.4 L656.8 856.4 L666.5 863.3 L676.4 863.3 L685.9 812.7 L695.0 812.7 L704.5 792.0 L714.4 792.0 L723.9 848.3 L733.0 848.3 L742.5 852.6 L752.4 852.6 L761.9 837.4 L771.4 837.4 L780.4 863.3 L789.9 863.3 L799.8 800.5 L808.9 800.5 L818.8 809.5 L828.3 809.5 L837.4 879.6 L847.3 879.6 L856.8 857.4 L865.9 857.4 L875.8 872.2 L884.8 872.2 L894.8 791.0 L904.2 791.0 L913.7 875.8 L923.2 875.8" stroke="#73bf69" stroke-width="1.1" stroke-opacity="0.88" fill="none" stroke-linejoin="round"/><rect x="362.4" y="769.2" width="190.1" height="130.8" fill="rgba(40,95,42,0.2)"/><path d="M362.9 769.2V900" stroke="#1c6a36" stroke-width="1.25" stroke-opacity="0.85" stroke-dasharray="3.5 2.6"/><path d="M552.5 769.2V900" stroke="#1c6a36" stroke-width="1.25" stroke-opacity="0.85" stroke-dasharray="3.5 2.6"/><path d="M1012.4 771.8H1592" stroke="rgba(204,204,220,0.11)" stroke-width="1"/><path d="M1012.4 797.1H1592" stroke="rgba(204,204,220,0.11)" stroke-width="1"/><path d="M1012.4 823H1592" stroke="rgba(204,204,220,0.11)" stroke-width="1"/><path d="M1012.4 848.5H1592" stroke="rgba(204,204,220,0.11)" stroke-width="1"/><path d="M1012.4 874.4H1592" stroke="rgba(204,204,220,0.11)" stroke-width="1"/><path d="M1110.2 769.2V900" stroke="rgba(204,204,220,0.11)" stroke-width="1"/><path d="M1206.2 769.2V900" stroke="rgba(204,204,220,0.11)" stroke-width="1"/><path d="M1303 769.2V900" stroke="rgba(204,204,220,0.11)" stroke-width="1"/><path d="M1400.5 769.2V900" stroke="rgba(204,204,220,0.11)" stroke-width="1"/><path d="M1497 769.2V900" stroke="rgba(204,204,220,0.11)" stroke-width="1"/><rect x="1012.4" y="769.2" width="193.8" height="130.8" fill="rgba(40,95,42,0.2)"/><path d="M1012.9 769.2V900" stroke="#1c6a36" stroke-width="1.25" stroke-opacity="0.85" stroke-dasharray="3.5 2.6"/><path d="M1206.2 769.2V900" stroke="#1c6a36" stroke-width="1.25" stroke-opacity="0.85" stroke-dasharray="3.5 2.6"/><path d="M604.7 421.4 L612.7 413.4 M609.1 421.4 L612.7 417.8" stroke="rgba(204,204,220,0.42)" stroke-width="1.2"/><path d="M936 421.4 L944 413.4 M940.4 421.4 L944 417.8" stroke="rgba(204,204,220,0.42)" stroke-width="1.2"/><path d="M1266.3 421.4 L1274.3 413.4 M1270.7 421.4 L1274.3 417.8" stroke="rgba(204,204,220,0.42)" stroke-width="1.2"/><path d="M1596.4 421.4 L1604.4 413.4 M1600.8 421.4 L1604.4 417.8" stroke="rgba(204,204,220,0.42)" stroke-width="1.2"/><path d="M936 686.6 L944 678.6 M940.4 686.6 L944 683" stroke="rgba(204,204,220,0.42)" stroke-width="1.2"/><path d="M1596.4 686.6 L1604.4 678.6 M1600.8 686.6 L1604.4 683" stroke="rgba(204,204,220,0.42)" stroke-width="1.2"/></svg>
</div></div>
</body></html>
